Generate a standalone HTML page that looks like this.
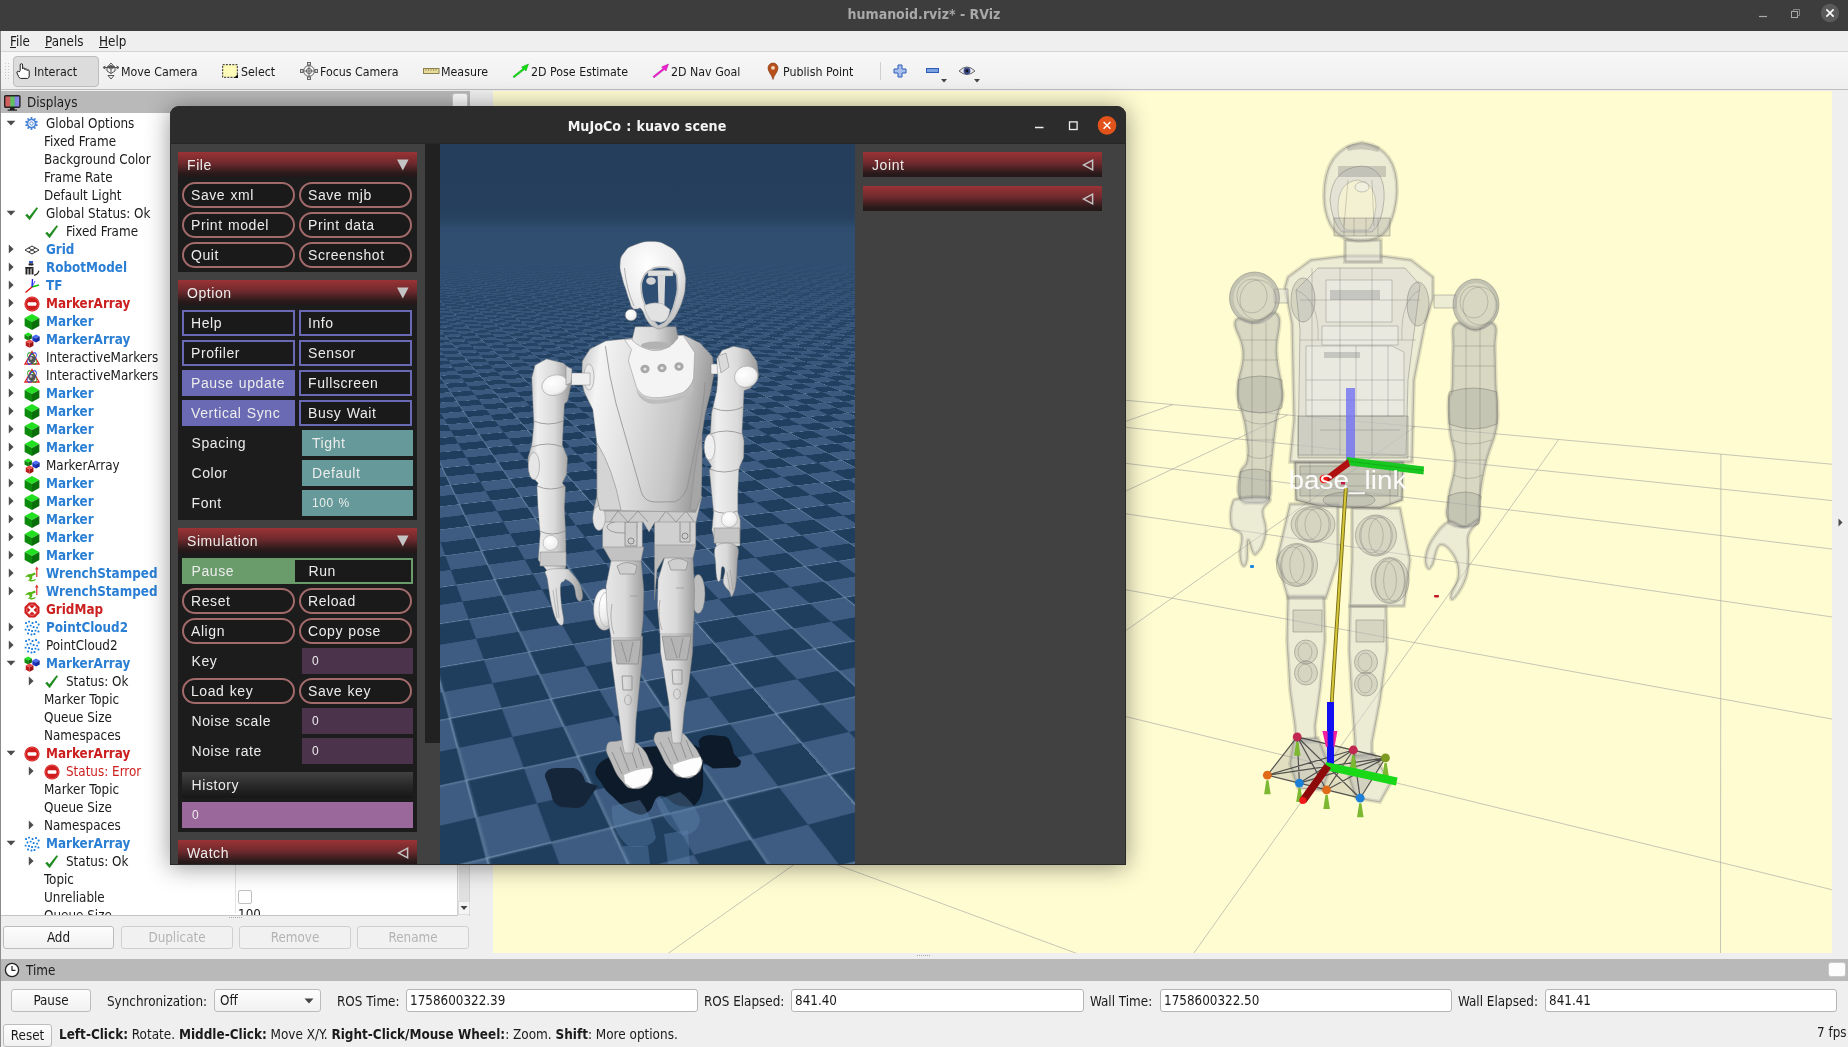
<!DOCTYPE html>
<html><head><meta charset="utf-8"><title>humanoid.rviz* - RViz</title>
<style>
*{box-sizing:border-box}
html,body{margin:0;padding:0}
body{width:1848px;height:1047px;position:relative;overflow:hidden;background:#efefef;
 font-family:"DejaVu Sans Condensed","DejaVu Sans","Liberation Sans",sans-serif;font-size:13.33px;color:#1a1a1a}
.a{position:absolute}
.t{position:absolute;white-space:nowrap;line-height:18px;height:18px}
.b{font-weight:bold}
.blue{color:#2a7fd4}
.red{color:#cc1f1f}
#titlebar{left:0;top:0;width:1848px;height:31px;background:#3d3d3d}
#title{left:0;width:1848px;top:4px;text-align:center;color:#a9a9a9;font-weight:bold;font-size:14px;line-height:20px;font-family:"DejaVu Sans Condensed","DejaVu Sans",sans-serif}
#menubar{left:0;top:31px;width:1848px;height:21px;background:#efefef;border-bottom:1px solid #d4d4d4}
#toolbar{left:0;top:52px;width:1848px;height:38px;background:linear-gradient(#f7f7f7,#efefef);border-bottom:1px solid #bdbdbd}
.tb{position:absolute;top:63px;font-size:12.3px;line-height:18px;white-space:nowrap}
.hdr{background:#b9b9b9}
.btn{position:absolute;border:1px solid #bcbcbc;border-radius:3px;background:linear-gradient(#fdfdfd,#f1f1f1);text-align:center;line-height:22px;height:23px}
.btn.dis{color:#b4b4b4;border-color:#cfcfcf;background:#f1f1f1}
.inp{position:absolute;border:1px solid #b5b5b5;border-radius:3px;background:#fff;height:23px;line-height:22px;padding-left:3px}
/* mujoco */
#mj{left:170px;top:106px;width:956px;height:759px;background:#414141;border-radius:9px 9px 0 0;box-shadow:0 2px 24px 0 rgba(0,0,0,.42);overflow:hidden;
 font-family:"Liberation Sans",sans-serif;font-size:14px;color:#ececec;letter-spacing:.58px;word-spacing:.8px}
#mjtitle{left:0;top:0;width:956px;height:38px;background:#2c2c2c}
.sec{position:absolute;left:8px;width:239px;background:#1c1c1c}
.sh{position:absolute;left:8px;width:239px;height:25px;background:linear-gradient(#9a3336 0%,#6e2a2d 45%,#2a1a1b 85%,#221819 100%);line-height:27px;padding-left:9px}
.mb{position:absolute;width:113px;height:26px;border:2px solid #a26a6a;border-radius:13px;line-height:22px;padding-left:7px;background:#1a1a1a}
.mc{position:absolute;width:113px;height:26px;border:2px solid #6a6ab4;line-height:22px;padding-left:7px;background:#1a1a1a}
.mc.on{background:#6a6ab4}
.ml{position:absolute;line-height:26px;height:26px}
.mv{position:absolute;width:111px;height:26px;line-height:26px;padding-left:10px}

#root{position:absolute;left:0;top:0;width:1848px;height:1047px;will-change:transform}

</style></head>
<body>
<div id="root">
<div id="titlebar" class="a"></div>
<div id="title" class="a">humanoid.rviz* - RViz</div>
<svg class="a" style="left:1755px;top:4.5px" width="16" height="16" viewBox="0 0 16 16" ><path d="M4 11.5 H12" stroke="#aaa" stroke-width="1.2"/></svg>
<svg class="a" style="left:1787px;top:5px" width="16" height="16" viewBox="0 0 16 16" ><rect x="4.5" y="6.5" width="6" height="6" fill="#3d3d3d" stroke="#aaa" stroke-width="1"/><path d="M6.5 6.5 V4.5 H12.5 V10.5 H10.5" fill="none" stroke="#888" stroke-width="1"/></svg>
<svg class="a" style="left:1820px;top:3px" width="20" height="20" viewBox="0 0 20 20" ><circle cx="10" cy="10" r="9.2" fill="#5a5a5a"/><path d="M6.4 6.4 L13.6 13.6 M13.6 6.4 L6.4 13.6" stroke="#fff" stroke-width="1.6"/></svg>
<div id="menubar" class="a"></div>
<div class="t" style="left:10px;top:33px"><u>F</u>ile</div>
<div class="t" style="left:45px;top:33px"><u>P</u>anels</div>
<div class="t" style="left:99px;top:33px"><u>H</u>elp</div>
<div id="toolbar" class="a"></div>
<svg class="a" style="left:5px;top:63px" width="5" height="18" viewBox="0 0 5 18" ><rect x="0" y="0" width="1" height="1" fill="#c8c8c8"/><rect x="0" y="3" width="1" height="1" fill="#c8c8c8"/><rect x="0" y="6" width="1" height="1" fill="#c8c8c8"/><rect x="0" y="9" width="1" height="1" fill="#c8c8c8"/><rect x="0" y="12" width="1" height="1" fill="#c8c8c8"/><rect x="0" y="15" width="1" height="1" fill="#c8c8c8"/><rect x="3" y="0" width="1" height="1" fill="#c8c8c8"/><rect x="3" y="3" width="1" height="1" fill="#c8c8c8"/><rect x="3" y="6" width="1" height="1" fill="#c8c8c8"/><rect x="3" y="9" width="1" height="1" fill="#c8c8c8"/><rect x="3" y="12" width="1" height="1" fill="#c8c8c8"/><rect x="3" y="15" width="1" height="1" fill="#c8c8c8"/></svg>
<div class="a" style="left:13px;top:56px;width:86px;height:31px;border:1px solid #bdbdbd;border-radius:4px;background:#dcdcdc"></div>
<svg class="a" style="left:15px;top:62px" width="18" height="18" viewBox="0 0 18 18" ><path d="M5.2 8.5 V3 q0 -1.3 1.2 -1.3 q1.2 0 1.2 1.3 V7 q0 -1 1.2 -1 q1.1 0 1.1 1 v.7 q0 -1 1.2 -.9 q1 .1 1 1 v.8 q0 -.8 1.1 -.7 q1 .1 1 1 V14 q0 2 -1.6 2.4 H5.6 q-1.4 -.3 -2 -1.8 L2 11 q-.5 -1.4 .7 -1.7 q.9 -.2 1.5 .8 z" fill="#fff" stroke="#222" stroke-width="1"/></svg>
<div class="tb" style="left:34px">Interact</div>
<svg class="a" style="left:102px;top:62px" width="18" height="18" viewBox="0 0 18 18" ><g fill="none" stroke="#555" stroke-width="1"><path d="M9 1 L12 4.5 H6 Z M9 17 L12 13.5 H6 Z"/><path d="M1 5.5 L17 5.5 M1 5.5 l2.5 -1.5 M1 5.5 l2.5 1.5 M17 5.5 l-2.5 -1.5 M17 5.5 l-2.5 1.5"/><path d="M5 5 L9 3.5 L13 5 L13 9 L9 11.5 L5 9 Z M5 5 L9 7 L13 5 M9 7 V11.5"/></g></svg>
<div class="tb" style="left:121px">Move Camera</div>
<svg class="a" style="left:222px;top:64px" width="17" height="15" viewBox="0 0 17 15" ><rect x=".7" y=".7" width="14.6" height="12.6" fill="#fffbb8" stroke="#222" stroke-width="1" stroke-dasharray="2 1.2"/><path d="M16 14 h-4 l4 -4z" fill="#111"/></svg>
<div class="tb" style="left:241px">Select</div>
<svg class="a" style="left:300px;top:62px" width="18" height="18" viewBox="0 0 18 18" ><g fill="none" stroke="#666" stroke-width="1"><circle cx="9" cy="9" r="5.4"/><circle cx="9" cy="9" r="2.6"/><path d="M9 0.5 V17.5 M0.5 9 H17.5"/><rect x="7.5" y="0.5" width="3" height="2.5" fill="#ddd"/><rect x="7.5" y="15" width="3" height="2.5" fill="#ddd"/><rect x=".5" y="7.5" width="2.5" height="3" fill="#ddd"/><rect x="15" y="7.5" width="2.5" height="3" fill="#ddd"/></g></svg>
<div class="tb" style="left:320px">Focus Camera</div>
<svg class="a" style="left:423px;top:68px" width="17" height="7" viewBox="0 0 17 7" ><rect x=".5" y=".5" width="15.5" height="5" fill="#e8dc9a" stroke="#8a8050" stroke-width="1"/><path d="M3 1 v2 M5.5 1 v2 M8 1 v2 M10.5 1 v2 M13 1 v2" stroke="#8a8050" stroke-width=".7"/></svg>
<div class="tb" style="left:441px">Measure</div>
<svg class="a" style="left:512px;top:63px" width="18" height="16" viewBox="0 0 18 16" ><path d="M1 13.5 L11 5.5 L9.6 4 L16.5 1 L14 8 L12.4 6.6 L2 14.8 Z" fill="#10e010" stroke="#0a9a0a" stroke-width=".5"/></svg>
<div class="tb" style="left:531px">2D Pose Estimate</div>
<svg class="a" style="left:652px;top:63px" width="18" height="16" viewBox="0 0 18 16" ><path d="M1 13.5 L11 5.5 L9.6 4 L16.5 1 L14 8 L12.4 6.6 L2 14.8 Z" fill="#f020d0" stroke="#b010a0" stroke-width=".5"/></svg>
<div class="tb" style="left:671px">2D Nav Goal</div>
<svg class="a" style="left:767px;top:62px" width="12" height="18" viewBox="0 0 12 18" ><path d="M6 17.5 C5 13 1 10 1 6 A5 5 0 0 1 11 6 C11 10 7 13 6 17.5 Z" fill="#b8501a" stroke="#7a3410" stroke-width=".6"/><circle cx="6" cy="5.8" r="1.9" fill="#f0d8c0"/></svg>
<div class="tb" style="left:783px">Publish Point</div>
<div class="a" style="left:880px;top:62px;width:1px;height:18px;background:#cfcfcf"></div>
<svg class="a" style="left:893px;top:64px" width="14" height="14" viewBox="0 0 14 14" ><path d="M5 1 h4 v4 h4 v4 h-4 v4 h-4 v-4 h-4 v-4 h4z" fill="#a9c0ec" stroke="#2c5cb8" stroke-width="1"/></svg>
<svg class="a" style="left:926px;top:68px" width="14" height="6" viewBox="0 0 14 6" ><rect x=".5" y=".5" width="12" height="4" fill="#7aa0e0" stroke="#2c5cb8" stroke-width="1"/></svg>
<svg class="a" style="left:941px;top:79px" width="6" height="4" viewBox="0 0 6 4" ><path d="M0 0 H6 L3 3.5Z" fill="#444"/></svg>
<svg class="a" style="left:958px;top:65px" width="18" height="12" viewBox="0 0 18 12" ><path d="M1 6 Q9 -2 17 6 Q9 13 1 6Z" fill="#e8e8f0" stroke="#666" stroke-width="1"/><circle cx="9" cy="6" r="3.4" fill="#3a4a8a"/><circle cx="9" cy="6" r="1.4" fill="#111"/></svg>
<svg class="a" style="left:974px;top:79px" width="6" height="4" viewBox="0 0 6 4" ><path d="M0 0 H6 L3 3.5Z" fill="#444"/></svg>
<div class="a" style="left:0;top:31px;width:1px;height:1016px;background:#8c8c8c"></div>
<div class="a hdr" style="left:1px;top:91px;width:469px;height:22px"></div>
<svg class="a" style="left:4px;top:95px" width="17" height="17" viewBox="0 0 17 17" ><defs><linearGradient id="dg" x1="0" x2="1"><stop offset="0" stop-color="#d06060"/><stop offset=".33" stop-color="#d06060"/><stop offset=".4" stop-color="#60c060"/><stop offset=".62" stop-color="#60c060"/><stop offset=".7" stop-color="#8080e0"/><stop offset="1" stop-color="#9090f0"/></linearGradient></defs><rect x=".7" y=".7" width="15.2" height="11.6" rx="1" fill="url(#dg)" stroke="#222" stroke-width="1.4"/><path d="M6 13 h4.6 v1.6 h2.4 v1.2 h-9.4 v-1.2 h2.4z" fill="#222"/></svg>
<div class="t" style="left:27px;top:94px">Displays</div>
<div class="a" style="left:452px;top:93px;width:16px;height:16px;background:#fcfcfc;border:1px solid #c8c8c8;border-radius:3px"></div>
<div class="a" style="left:1px;top:113px;width:469px;height:803px;background:#fff;border-bottom:1px solid #c4c4c4"></div>
<div class="a" style="left:1px;top:113px;width:469px;height:802px;overflow:hidden"><div class="a" style="left:-1px;top:-113px"><svg class="a" style="left:6px;top:120px" width="10" height="6" viewBox="0 0 10 6" ><path d="M.6 .8 H9.4 L5 5.6 Z" fill="#4c4c4c"/></svg>
<svg class="a" style="left:24px;top:116px" width="16" height="16" viewBox="0 0 16 16" ><g fill="#4a84d6"><rect x="6.6" y="1" width="1.8" height="2.6" rx=".6" transform="rotate(0 7.5 7.5)"/><rect x="6.6" y="1" width="1.8" height="2.6" rx=".6" transform="rotate(36 7.5 7.5)"/><rect x="6.6" y="1" width="1.8" height="2.6" rx=".6" transform="rotate(72 7.5 7.5)"/><rect x="6.6" y="1" width="1.8" height="2.6" rx=".6" transform="rotate(108 7.5 7.5)"/><rect x="6.6" y="1" width="1.8" height="2.6" rx=".6" transform="rotate(144 7.5 7.5)"/><rect x="6.6" y="1" width="1.8" height="2.6" rx=".6" transform="rotate(180 7.5 7.5)"/><rect x="6.6" y="1" width="1.8" height="2.6" rx=".6" transform="rotate(216 7.5 7.5)"/><rect x="6.6" y="1" width="1.8" height="2.6" rx=".6" transform="rotate(252 7.5 7.5)"/><rect x="6.6" y="1" width="1.8" height="2.6" rx=".6" transform="rotate(288 7.5 7.5)"/><rect x="6.6" y="1" width="1.8" height="2.6" rx=".6" transform="rotate(324 7.5 7.5)"/></g><circle cx="7.5" cy="7.5" r="4" fill="none" stroke="#4a84d6" stroke-width="1.7"/><circle cx="7.5" cy="7.5" r="1.7" fill="none" stroke="#4a84d6" stroke-width=".9"/></svg>
<div class="t " style="left:46px;top:115px">Global Options</div>
<div class="t " style="left:44px;top:133px">Fixed Frame</div>
<div class="t " style="left:44px;top:151px">Background Color</div>
<div class="t " style="left:44px;top:169px">Frame Rate</div>
<div class="t " style="left:44px;top:187px">Default Light</div>
<svg class="a" style="left:6px;top:210px" width="10" height="6" viewBox="0 0 10 6" ><path d="M.6 .8 H9.4 L5 5.6 Z" fill="#4c4c4c"/></svg>
<svg class="a" style="left:24px;top:206px" width="16" height="16" viewBox="0 0 16 16" ><path d="M1.5 9.2 L5.6 14 L13.8 2.2 L12.6 1.6 L5.4 10.6 L3.2 8 Z" fill="#1e8a1e" stroke="#1e8a1e" stroke-width=".4"/></svg>
<div class="t " style="left:46px;top:205px">Global Status: Ok</div>
<svg class="a" style="left:44px;top:224px" width="16" height="16" viewBox="0 0 16 16" ><path d="M1.5 9.2 L5.6 14 L13.8 2.2 L12.6 1.6 L5.4 10.6 L3.2 8 Z" fill="#1e8a1e" stroke="#1e8a1e" stroke-width=".4"/></svg>
<div class="t " style="left:66px;top:223px">Fixed Frame</div>
<svg class="a" style="left:8px;top:244px" width="6" height="10" viewBox="0 0 6 10" ><path d="M.8 .6 V9.4 L5.6 5 Z" fill="#4c4c4c"/></svg>
<svg class="a" style="left:24px;top:242px" width="16" height="16" viewBox="0 0 16 16" ><g fill="none" stroke="#333" stroke-width="1"><path d="M1 8 L8 4 L15 8 L8 12 Z"/><path d="M4.5 6 L11.5 10 M11.5 6 L4.5 10"/></g></svg>
<div class="t b blue" style="left:46px;top:241px">Grid</div>
<svg class="a" style="left:8px;top:262px" width="6" height="10" viewBox="0 0 6 10" ><path d="M.8 .6 V9.4 L5.6 5 Z" fill="#4c4c4c"/></svg>
<svg class="a" style="left:24px;top:260px" width="16" height="16" viewBox="0 0 16 16" ><g fill="#222"><rect x="5" y="1" width="4" height="2" fill="#3355cc"/><rect x="4.5" y="3.2" width="5" height="2.2" rx="1"/><rect x="1.5" y="7" width="2" height="7.5"/><rect x="4.5" y="7" width="2" height="7.5"/><rect x="7.5" y="8.5" width="2" height="6"/><path d="M1.5 7 h8 v1.6 h-8z"/><path d="M10 14.5 q3 0 4.5 -4 l1 .4 q-1.6 4.8 -5.5 4.8z"/></g></svg>
<div class="t b blue" style="left:46px;top:259px">RobotModel</div>
<svg class="a" style="left:8px;top:280px" width="6" height="10" viewBox="0 0 6 10" ><path d="M.8 .6 V9.4 L5.6 5 Z" fill="#4c4c4c"/></svg>
<svg class="a" style="left:24px;top:278px" width="16" height="16" viewBox="0 0 16 16" ><g stroke-width="1.4" fill="none"><path d="M8 9 L8.5 1" stroke="#2222ee"/><path d="M8 9 L15 7" stroke="#10c010"/><path d="M8 9 L1.5 14.5" stroke="#e01010"/><path d="M8 9 L11 3" stroke="#2222ee" stroke-width=".8"/></g></svg>
<div class="t b blue" style="left:46px;top:277px">TF</div>
<svg class="a" style="left:8px;top:298px" width="6" height="10" viewBox="0 0 6 10" ><path d="M.8 .6 V9.4 L5.6 5 Z" fill="#4c4c4c"/></svg>
<svg class="a" style="left:24px;top:296px" width="16" height="16" viewBox="0 0 16 16" ><circle cx="8" cy="8" r="7.6" fill="#d01c1c"/><circle cx="8" cy="8" r="6.6" fill="none" stroke="#e85050" stroke-width=".8"/><rect x="3.6" y="6.2" width="8.8" height="3.6" rx="1" fill="#fff"/></svg>
<div class="t b red" style="left:46px;top:295px">MarkerArray</div>
<svg class="a" style="left:8px;top:316px" width="6" height="10" viewBox="0 0 6 10" ><path d="M.8 .6 V9.4 L5.6 5 Z" fill="#4c4c4c"/></svg>
<svg class="a" style="left:24px;top:314px" width="16" height="16" viewBox="0 0 16 16" ><path d="M8 0 L15.36 4.0 L8 8 L0.6399999999999997 4.0 Z" fill="#20e020"/><path d="M0.6399999999999997 4.0 L8 8 L8 16 L0.6399999999999997 12.0 Z" fill="#0c8a0c"/><path d="M15.36 4.0 L8 8 L8 16 L15.36 12.0 Z" fill="#0a6f0a"/></svg>
<div class="t b blue" style="left:46px;top:313px">Marker</div>
<svg class="a" style="left:8px;top:334px" width="6" height="10" viewBox="0 0 6 10" ><path d="M.8 .6 V9.4 L5.6 5 Z" fill="#4c4c4c"/></svg>
<svg class="a" style="left:24px;top:332px" width="16" height="16" viewBox="0 0 16 16" ><path d="M4.2 0.5999999999999996 L7.880000000000001 2.5999999999999996 L4.2 4.6 L0.52 2.5999999999999996 Z" fill="#20e020"/><path d="M0.52 2.5999999999999996 L4.2 4.6 L4.2 8.6 L0.52 6.6 Z" fill="#0c8a0c"/><path d="M7.880000000000001 2.5999999999999996 L4.2 4.6 L4.2 8.6 L7.880000000000001 6.6 Z" fill="#0a6f0a"/><path d="M12 2.4000000000000004 L15.68 4.4 L12 6.4 L8.32 4.4 Z" fill="#4a6cf0"/><path d="M8.32 4.4 L12 6.4 L12 10.4 L8.32 8.4 Z" fill="#1c36c0"/><path d="M15.68 4.4 L12 6.4 L12 10.4 L15.68 8.4 Z" fill="#122a9a"/><path d="M5.6 7.3999999999999995 L9.464 9.5 L5.6 11.6 L1.7359999999999993 9.5 Z" fill="#f05050"/><path d="M1.7359999999999993 9.5 L5.6 11.6 L5.6 15.8 L1.7359999999999993 13.7 Z" fill="#c01c1c"/><path d="M9.464 9.5 L5.6 11.6 L5.6 15.8 L9.464 13.7 Z" fill="#9a1212"/></svg>
<div class="t b blue" style="left:46px;top:331px">MarkerArray</div>
<svg class="a" style="left:8px;top:352px" width="6" height="10" viewBox="0 0 6 10" ><path d="M.8 .6 V9.4 L5.6 5 Z" fill="#4c4c4c"/></svg>
<svg class="a" style="left:24px;top:350px" width="16" height="16" viewBox="0 0 16 16" ><path d="M8 1.5 L15 14 H1 Z" fill="none" stroke="#e02020" stroke-width="1.3"/><ellipse cx="8" cy="8.5" rx="6.5" ry="3" fill="none" stroke="#20a020" stroke-width="1" transform="rotate(58 8 8.5)"/><ellipse cx="8" cy="8.5" rx="6.5" ry="3" fill="none" stroke="#2040e0" stroke-width="1" transform="rotate(-58 8 8.5)"/><circle cx="8" cy="9.5" r="3.4" fill="#555"/><circle cx="7" cy="8.4" r="1.3" fill="#bbb"/></svg>
<div class="t " style="left:46px;top:349px">InteractiveMarkers</div>
<svg class="a" style="left:8px;top:370px" width="6" height="10" viewBox="0 0 6 10" ><path d="M.8 .6 V9.4 L5.6 5 Z" fill="#4c4c4c"/></svg>
<svg class="a" style="left:24px;top:368px" width="16" height="16" viewBox="0 0 16 16" ><path d="M8 1.5 L15 14 H1 Z" fill="none" stroke="#e02020" stroke-width="1.3"/><ellipse cx="8" cy="8.5" rx="6.5" ry="3" fill="none" stroke="#20a020" stroke-width="1" transform="rotate(58 8 8.5)"/><ellipse cx="8" cy="8.5" rx="6.5" ry="3" fill="none" stroke="#2040e0" stroke-width="1" transform="rotate(-58 8 8.5)"/><circle cx="8" cy="9.5" r="3.4" fill="#555"/><circle cx="7" cy="8.4" r="1.3" fill="#bbb"/></svg>
<div class="t " style="left:46px;top:367px">InteractiveMarkers</div>
<svg class="a" style="left:8px;top:388px" width="6" height="10" viewBox="0 0 6 10" ><path d="M.8 .6 V9.4 L5.6 5 Z" fill="#4c4c4c"/></svg>
<svg class="a" style="left:24px;top:386px" width="16" height="16" viewBox="0 0 16 16" ><path d="M8 0 L15.36 4.0 L8 8 L0.6399999999999997 4.0 Z" fill="#20e020"/><path d="M0.6399999999999997 4.0 L8 8 L8 16 L0.6399999999999997 12.0 Z" fill="#0c8a0c"/><path d="M15.36 4.0 L8 8 L8 16 L15.36 12.0 Z" fill="#0a6f0a"/></svg>
<div class="t b blue" style="left:46px;top:385px">Marker</div>
<svg class="a" style="left:8px;top:406px" width="6" height="10" viewBox="0 0 6 10" ><path d="M.8 .6 V9.4 L5.6 5 Z" fill="#4c4c4c"/></svg>
<svg class="a" style="left:24px;top:404px" width="16" height="16" viewBox="0 0 16 16" ><path d="M8 0 L15.36 4.0 L8 8 L0.6399999999999997 4.0 Z" fill="#20e020"/><path d="M0.6399999999999997 4.0 L8 8 L8 16 L0.6399999999999997 12.0 Z" fill="#0c8a0c"/><path d="M15.36 4.0 L8 8 L8 16 L15.36 12.0 Z" fill="#0a6f0a"/></svg>
<div class="t b blue" style="left:46px;top:403px">Marker</div>
<svg class="a" style="left:8px;top:424px" width="6" height="10" viewBox="0 0 6 10" ><path d="M.8 .6 V9.4 L5.6 5 Z" fill="#4c4c4c"/></svg>
<svg class="a" style="left:24px;top:422px" width="16" height="16" viewBox="0 0 16 16" ><path d="M8 0 L15.36 4.0 L8 8 L0.6399999999999997 4.0 Z" fill="#20e020"/><path d="M0.6399999999999997 4.0 L8 8 L8 16 L0.6399999999999997 12.0 Z" fill="#0c8a0c"/><path d="M15.36 4.0 L8 8 L8 16 L15.36 12.0 Z" fill="#0a6f0a"/></svg>
<div class="t b blue" style="left:46px;top:421px">Marker</div>
<svg class="a" style="left:8px;top:442px" width="6" height="10" viewBox="0 0 6 10" ><path d="M.8 .6 V9.4 L5.6 5 Z" fill="#4c4c4c"/></svg>
<svg class="a" style="left:24px;top:440px" width="16" height="16" viewBox="0 0 16 16" ><path d="M8 0 L15.36 4.0 L8 8 L0.6399999999999997 4.0 Z" fill="#20e020"/><path d="M0.6399999999999997 4.0 L8 8 L8 16 L0.6399999999999997 12.0 Z" fill="#0c8a0c"/><path d="M15.36 4.0 L8 8 L8 16 L15.36 12.0 Z" fill="#0a6f0a"/></svg>
<div class="t b blue" style="left:46px;top:439px">Marker</div>
<svg class="a" style="left:8px;top:460px" width="6" height="10" viewBox="0 0 6 10" ><path d="M.8 .6 V9.4 L5.6 5 Z" fill="#4c4c4c"/></svg>
<svg class="a" style="left:24px;top:458px" width="16" height="16" viewBox="0 0 16 16" ><path d="M4.2 0.5999999999999996 L7.880000000000001 2.5999999999999996 L4.2 4.6 L0.52 2.5999999999999996 Z" fill="#20e020"/><path d="M0.52 2.5999999999999996 L4.2 4.6 L4.2 8.6 L0.52 6.6 Z" fill="#0c8a0c"/><path d="M7.880000000000001 2.5999999999999996 L4.2 4.6 L4.2 8.6 L7.880000000000001 6.6 Z" fill="#0a6f0a"/><path d="M12 2.4000000000000004 L15.68 4.4 L12 6.4 L8.32 4.4 Z" fill="#4a6cf0"/><path d="M8.32 4.4 L12 6.4 L12 10.4 L8.32 8.4 Z" fill="#1c36c0"/><path d="M15.68 4.4 L12 6.4 L12 10.4 L15.68 8.4 Z" fill="#122a9a"/><path d="M5.6 7.3999999999999995 L9.464 9.5 L5.6 11.6 L1.7359999999999993 9.5 Z" fill="#f05050"/><path d="M1.7359999999999993 9.5 L5.6 11.6 L5.6 15.8 L1.7359999999999993 13.7 Z" fill="#c01c1c"/><path d="M9.464 9.5 L5.6 11.6 L5.6 15.8 L9.464 13.7 Z" fill="#9a1212"/></svg>
<div class="t " style="left:46px;top:457px">MarkerArray</div>
<svg class="a" style="left:8px;top:478px" width="6" height="10" viewBox="0 0 6 10" ><path d="M.8 .6 V9.4 L5.6 5 Z" fill="#4c4c4c"/></svg>
<svg class="a" style="left:24px;top:476px" width="16" height="16" viewBox="0 0 16 16" ><path d="M8 0 L15.36 4.0 L8 8 L0.6399999999999997 4.0 Z" fill="#20e020"/><path d="M0.6399999999999997 4.0 L8 8 L8 16 L0.6399999999999997 12.0 Z" fill="#0c8a0c"/><path d="M15.36 4.0 L8 8 L8 16 L15.36 12.0 Z" fill="#0a6f0a"/></svg>
<div class="t b blue" style="left:46px;top:475px">Marker</div>
<svg class="a" style="left:8px;top:496px" width="6" height="10" viewBox="0 0 6 10" ><path d="M.8 .6 V9.4 L5.6 5 Z" fill="#4c4c4c"/></svg>
<svg class="a" style="left:24px;top:494px" width="16" height="16" viewBox="0 0 16 16" ><path d="M8 0 L15.36 4.0 L8 8 L0.6399999999999997 4.0 Z" fill="#20e020"/><path d="M0.6399999999999997 4.0 L8 8 L8 16 L0.6399999999999997 12.0 Z" fill="#0c8a0c"/><path d="M15.36 4.0 L8 8 L8 16 L15.36 12.0 Z" fill="#0a6f0a"/></svg>
<div class="t b blue" style="left:46px;top:493px">Marker</div>
<svg class="a" style="left:8px;top:514px" width="6" height="10" viewBox="0 0 6 10" ><path d="M.8 .6 V9.4 L5.6 5 Z" fill="#4c4c4c"/></svg>
<svg class="a" style="left:24px;top:512px" width="16" height="16" viewBox="0 0 16 16" ><path d="M8 0 L15.36 4.0 L8 8 L0.6399999999999997 4.0 Z" fill="#20e020"/><path d="M0.6399999999999997 4.0 L8 8 L8 16 L0.6399999999999997 12.0 Z" fill="#0c8a0c"/><path d="M15.36 4.0 L8 8 L8 16 L15.36 12.0 Z" fill="#0a6f0a"/></svg>
<div class="t b blue" style="left:46px;top:511px">Marker</div>
<svg class="a" style="left:8px;top:532px" width="6" height="10" viewBox="0 0 6 10" ><path d="M.8 .6 V9.4 L5.6 5 Z" fill="#4c4c4c"/></svg>
<svg class="a" style="left:24px;top:530px" width="16" height="16" viewBox="0 0 16 16" ><path d="M8 0 L15.36 4.0 L8 8 L0.6399999999999997 4.0 Z" fill="#20e020"/><path d="M0.6399999999999997 4.0 L8 8 L8 16 L0.6399999999999997 12.0 Z" fill="#0c8a0c"/><path d="M15.36 4.0 L8 8 L8 16 L15.36 12.0 Z" fill="#0a6f0a"/></svg>
<div class="t b blue" style="left:46px;top:529px">Marker</div>
<svg class="a" style="left:8px;top:550px" width="6" height="10" viewBox="0 0 6 10" ><path d="M.8 .6 V9.4 L5.6 5 Z" fill="#4c4c4c"/></svg>
<svg class="a" style="left:24px;top:548px" width="16" height="16" viewBox="0 0 16 16" ><path d="M8 0 L15.36 4.0 L8 8 L0.6399999999999997 4.0 Z" fill="#20e020"/><path d="M0.6399999999999997 4.0 L8 8 L8 16 L0.6399999999999997 12.0 Z" fill="#0c8a0c"/><path d="M15.36 4.0 L8 8 L8 16 L15.36 12.0 Z" fill="#0a6f0a"/></svg>
<div class="t b blue" style="left:46px;top:547px">Marker</div>
<svg class="a" style="left:8px;top:568px" width="6" height="10" viewBox="0 0 6 10" ><path d="M.8 .6 V9.4 L5.6 5 Z" fill="#4c4c4c"/></svg>
<svg class="a" style="left:24px;top:566px" width="16" height="16" viewBox="0 0 16 16" ><path d="M12.8 0.5 L14.6 3.6 H13.4 V11 H12.2 V3.6 H11 Z" fill="#e03030"/><path d="M1 11.5 q2 -4 6 -3.5 l4 -1.5 l.8 2 l-3.6 1.6 q1 3.4 -2.4 4.6 q-1 .3 -2 -.2 l2 -1.6 l-.6 -1.8 l-2.2 -.3 z" fill="#58b818"/><path d="M6 14.5 q3 .8 5.5 -1" fill="none" stroke="#58b818" stroke-width="1.3"/></svg>
<div class="t b blue" style="left:46px;top:565px">WrenchStamped</div>
<svg class="a" style="left:8px;top:586px" width="6" height="10" viewBox="0 0 6 10" ><path d="M.8 .6 V9.4 L5.6 5 Z" fill="#4c4c4c"/></svg>
<svg class="a" style="left:24px;top:584px" width="16" height="16" viewBox="0 0 16 16" ><path d="M12.8 0.5 L14.6 3.6 H13.4 V11 H12.2 V3.6 H11 Z" fill="#e03030"/><path d="M1 11.5 q2 -4 6 -3.5 l4 -1.5 l.8 2 l-3.6 1.6 q1 3.4 -2.4 4.6 q-1 .3 -2 -.2 l2 -1.6 l-.6 -1.8 l-2.2 -.3 z" fill="#58b818"/><path d="M6 14.5 q3 .8 5.5 -1" fill="none" stroke="#58b818" stroke-width="1.3"/></svg>
<div class="t b blue" style="left:46px;top:583px">WrenchStamped</div>
<svg class="a" style="left:24px;top:602px" width="16" height="16" viewBox="0 0 16 16" ><path d="M5 .5 h6 l4.5 4.5 v6 l-4.5 4.5 h-6 l-4.5 -4.5 v-6 z" fill="#d01c1c"/><circle cx="8" cy="8" r="5.3" fill="none" stroke="#ef7f7f" stroke-width=".9"/><path d="M5.2 5.2 L10.8 10.8 M10.8 5.2 L5.2 10.8" stroke="#fff" stroke-width="2.2" stroke-linecap="round"/></svg>
<div class="t b red" style="left:46px;top:601px">GridMap</div>
<svg class="a" style="left:8px;top:622px" width="6" height="10" viewBox="0 0 6 10" ><path d="M.8 .6 V9.4 L5.6 5 Z" fill="#4c4c4c"/></svg>
<svg class="a" style="left:24px;top:620px" width="16" height="16" viewBox="0 0 16 16" ><rect x="1.1" y="2.1" width="1.9" height="1.9" rx=".6" fill="#1f7fe0"/><rect x="4.1" y="0.7000000000000001" width="1.9" height="1.9" rx=".6" fill="#1f7fe0"/><rect x="7.6" y="2.1" width="1.9" height="1.9" rx=".6" fill="#1f7fe0"/><rect x="11.1" y="1.1" width="1.9" height="1.9" rx=".6" fill="#1f7fe0"/><rect x="13.7" y="3.6" width="1.9" height="1.9" rx=".6" fill="#1f7fe0"/><rect x="2.5" y="5.5" width="1.9" height="1.9" rx=".6" fill="#1f7fe0"/><rect x="5.699999999999999" y="4.699999999999999" width="1.9" height="1.9" rx=".6" fill="#1f7fe0"/><rect x="8.7" y="6.1" width="1.9" height="1.9" rx=".6" fill="#1f7fe0"/><rect x="12.1" y="6.699999999999999" width="1.9" height="1.9" rx=".6" fill="#1f7fe0"/><rect x="0.7000000000000001" y="8.7" width="1.9" height="1.9" rx=".6" fill="#1f7fe0"/><rect x="4.1" y="9.1" width="1.9" height="1.9" rx=".6" fill="#1f7fe0"/><rect x="7.1" y="10.1" width="1.9" height="1.9" rx=".6" fill="#1f7fe0"/><rect x="10.5" y="9.7" width="1.9" height="1.9" rx=".6" fill="#1f7fe0"/><rect x="13.5" y="10.5" width="1.9" height="1.9" rx=".6" fill="#1f7fe0"/><rect x="3.1" y="12.5" width="1.9" height="1.9" rx=".6" fill="#1f7fe0"/><rect x="6.5" y="13.5" width="1.9" height="1.9" rx=".6" fill="#1f7fe0"/><rect x="9.5" y="13.1" width="1.9" height="1.9" rx=".6" fill="#1f7fe0"/></svg>
<div class="t b blue" style="left:46px;top:619px">PointCloud2</div>
<svg class="a" style="left:8px;top:640px" width="6" height="10" viewBox="0 0 6 10" ><path d="M.8 .6 V9.4 L5.6 5 Z" fill="#4c4c4c"/></svg>
<svg class="a" style="left:24px;top:638px" width="16" height="16" viewBox="0 0 16 16" ><rect x="1.1" y="2.1" width="1.9" height="1.9" rx=".6" fill="#1f7fe0"/><rect x="4.1" y="0.7000000000000001" width="1.9" height="1.9" rx=".6" fill="#1f7fe0"/><rect x="7.6" y="2.1" width="1.9" height="1.9" rx=".6" fill="#1f7fe0"/><rect x="11.1" y="1.1" width="1.9" height="1.9" rx=".6" fill="#1f7fe0"/><rect x="13.7" y="3.6" width="1.9" height="1.9" rx=".6" fill="#1f7fe0"/><rect x="2.5" y="5.5" width="1.9" height="1.9" rx=".6" fill="#1f7fe0"/><rect x="5.699999999999999" y="4.699999999999999" width="1.9" height="1.9" rx=".6" fill="#1f7fe0"/><rect x="8.7" y="6.1" width="1.9" height="1.9" rx=".6" fill="#1f7fe0"/><rect x="12.1" y="6.699999999999999" width="1.9" height="1.9" rx=".6" fill="#1f7fe0"/><rect x="0.7000000000000001" y="8.7" width="1.9" height="1.9" rx=".6" fill="#1f7fe0"/><rect x="4.1" y="9.1" width="1.9" height="1.9" rx=".6" fill="#1f7fe0"/><rect x="7.1" y="10.1" width="1.9" height="1.9" rx=".6" fill="#1f7fe0"/><rect x="10.5" y="9.7" width="1.9" height="1.9" rx=".6" fill="#1f7fe0"/><rect x="13.5" y="10.5" width="1.9" height="1.9" rx=".6" fill="#1f7fe0"/><rect x="3.1" y="12.5" width="1.9" height="1.9" rx=".6" fill="#1f7fe0"/><rect x="6.5" y="13.5" width="1.9" height="1.9" rx=".6" fill="#1f7fe0"/><rect x="9.5" y="13.1" width="1.9" height="1.9" rx=".6" fill="#1f7fe0"/></svg>
<div class="t " style="left:46px;top:637px">PointCloud2</div>
<svg class="a" style="left:6px;top:660px" width="10" height="6" viewBox="0 0 10 6" ><path d="M.6 .8 H9.4 L5 5.6 Z" fill="#4c4c4c"/></svg>
<svg class="a" style="left:24px;top:656px" width="16" height="16" viewBox="0 0 16 16" ><path d="M4.2 0.5999999999999996 L7.880000000000001 2.5999999999999996 L4.2 4.6 L0.52 2.5999999999999996 Z" fill="#20e020"/><path d="M0.52 2.5999999999999996 L4.2 4.6 L4.2 8.6 L0.52 6.6 Z" fill="#0c8a0c"/><path d="M7.880000000000001 2.5999999999999996 L4.2 4.6 L4.2 8.6 L7.880000000000001 6.6 Z" fill="#0a6f0a"/><path d="M12 2.4000000000000004 L15.68 4.4 L12 6.4 L8.32 4.4 Z" fill="#4a6cf0"/><path d="M8.32 4.4 L12 6.4 L12 10.4 L8.32 8.4 Z" fill="#1c36c0"/><path d="M15.68 4.4 L12 6.4 L12 10.4 L15.68 8.4 Z" fill="#122a9a"/><path d="M5.6 7.3999999999999995 L9.464 9.5 L5.6 11.6 L1.7359999999999993 9.5 Z" fill="#f05050"/><path d="M1.7359999999999993 9.5 L5.6 11.6 L5.6 15.8 L1.7359999999999993 13.7 Z" fill="#c01c1c"/><path d="M9.464 9.5 L5.6 11.6 L5.6 15.8 L9.464 13.7 Z" fill="#9a1212"/></svg>
<div class="t b blue" style="left:46px;top:655px">MarkerArray</div>
<svg class="a" style="left:28px;top:676px" width="6" height="10" viewBox="0 0 6 10" ><path d="M.8 .6 V9.4 L5.6 5 Z" fill="#4c4c4c"/></svg>
<svg class="a" style="left:44px;top:674px" width="16" height="16" viewBox="0 0 16 16" ><path d="M1.5 9.2 L5.6 14 L13.8 2.2 L12.6 1.6 L5.4 10.6 L3.2 8 Z" fill="#1e8a1e" stroke="#1e8a1e" stroke-width=".4"/></svg>
<div class="t " style="left:66px;top:673px">Status: Ok</div>
<div class="t " style="left:44px;top:691px">Marker Topic</div>
<div class="t " style="left:44px;top:709px">Queue Size</div>
<div class="t " style="left:44px;top:727px">Namespaces</div>
<svg class="a" style="left:6px;top:750px" width="10" height="6" viewBox="0 0 10 6" ><path d="M.6 .8 H9.4 L5 5.6 Z" fill="#4c4c4c"/></svg>
<svg class="a" style="left:24px;top:746px" width="16" height="16" viewBox="0 0 16 16" ><circle cx="8" cy="8" r="7.6" fill="#d01c1c"/><circle cx="8" cy="8" r="6.6" fill="none" stroke="#e85050" stroke-width=".8"/><rect x="3.6" y="6.2" width="8.8" height="3.6" rx="1" fill="#fff"/></svg>
<div class="t b red" style="left:46px;top:745px">MarkerArray</div>
<svg class="a" style="left:28px;top:766px" width="6" height="10" viewBox="0 0 6 10" ><path d="M.8 .6 V9.4 L5.6 5 Z" fill="#4c4c4c"/></svg>
<svg class="a" style="left:44px;top:764px" width="16" height="16" viewBox="0 0 16 16" ><circle cx="8" cy="8" r="7.6" fill="#d01c1c"/><circle cx="8" cy="8" r="6.6" fill="none" stroke="#e85050" stroke-width=".8"/><rect x="3.6" y="6.2" width="8.8" height="3.6" rx="1" fill="#fff"/></svg>
<div class="t red" style="left:66px;top:763px">Status: Error</div>
<div class="t " style="left:44px;top:781px">Marker Topic</div>
<div class="t " style="left:44px;top:799px">Queue Size</div>
<svg class="a" style="left:28px;top:820px" width="6" height="10" viewBox="0 0 6 10" ><path d="M.8 .6 V9.4 L5.6 5 Z" fill="#4c4c4c"/></svg>
<div class="t " style="left:44px;top:817px">Namespaces</div>
<svg class="a" style="left:6px;top:840px" width="10" height="6" viewBox="0 0 10 6" ><path d="M.6 .8 H9.4 L5 5.6 Z" fill="#4c4c4c"/></svg>
<svg class="a" style="left:24px;top:836px" width="16" height="16" viewBox="0 0 16 16" ><rect x="1.1" y="2.1" width="1.9" height="1.9" rx=".6" fill="#1f7fe0"/><rect x="4.1" y="0.7000000000000001" width="1.9" height="1.9" rx=".6" fill="#1f7fe0"/><rect x="7.6" y="2.1" width="1.9" height="1.9" rx=".6" fill="#1f7fe0"/><rect x="11.1" y="1.1" width="1.9" height="1.9" rx=".6" fill="#1f7fe0"/><rect x="13.7" y="3.6" width="1.9" height="1.9" rx=".6" fill="#1f7fe0"/><rect x="2.5" y="5.5" width="1.9" height="1.9" rx=".6" fill="#1f7fe0"/><rect x="5.699999999999999" y="4.699999999999999" width="1.9" height="1.9" rx=".6" fill="#1f7fe0"/><rect x="8.7" y="6.1" width="1.9" height="1.9" rx=".6" fill="#1f7fe0"/><rect x="12.1" y="6.699999999999999" width="1.9" height="1.9" rx=".6" fill="#1f7fe0"/><rect x="0.7000000000000001" y="8.7" width="1.9" height="1.9" rx=".6" fill="#1f7fe0"/><rect x="4.1" y="9.1" width="1.9" height="1.9" rx=".6" fill="#1f7fe0"/><rect x="7.1" y="10.1" width="1.9" height="1.9" rx=".6" fill="#1f7fe0"/><rect x="10.5" y="9.7" width="1.9" height="1.9" rx=".6" fill="#1f7fe0"/><rect x="13.5" y="10.5" width="1.9" height="1.9" rx=".6" fill="#1f7fe0"/><rect x="3.1" y="12.5" width="1.9" height="1.9" rx=".6" fill="#1f7fe0"/><rect x="6.5" y="13.5" width="1.9" height="1.9" rx=".6" fill="#1f7fe0"/><rect x="9.5" y="13.1" width="1.9" height="1.9" rx=".6" fill="#1f7fe0"/></svg>
<div class="t b blue" style="left:46px;top:835px">MarkerArray</div>
<svg class="a" style="left:28px;top:856px" width="6" height="10" viewBox="0 0 6 10" ><path d="M.8 .6 V9.4 L5.6 5 Z" fill="#4c4c4c"/></svg>
<svg class="a" style="left:44px;top:854px" width="16" height="16" viewBox="0 0 16 16" ><path d="M1.5 9.2 L5.6 14 L13.8 2.2 L12.6 1.6 L5.4 10.6 L3.2 8 Z" fill="#1e8a1e" stroke="#1e8a1e" stroke-width=".4"/></svg>
<div class="t " style="left:66px;top:853px">Status: Ok</div>
<div class="t " style="left:44px;top:871px">Topic</div>
<div class="t " style="left:44px;top:889px">Unreliable</div>
<div class="t " style="left:44px;top:907px">Queue Size</div><div class="a" style="left:238px;top:890px;width:14px;height:14px;border:1px solid #c0c0c0;border-radius:2px;background:#fff"></div><div class="t" style="left:238px;top:906px">100</div></div></div>
<div class="a" style="left:235px;top:113px;width:1px;height:800px;background:#e4e4e4"></div>
<div class="a" style="left:457px;top:113px;width:13px;height:803px;background:#efefef;border-left:1px solid #d0d0d0;border-right:1px solid #d0d0d0"></div>
<div class="a" style="left:459px;top:113px;width:10px;height:788px;background:#e0e0e0"></div>
<svg class="a" style="left:458px;top:901px" width="12" height="14" viewBox="0 0 12 14" ><rect x="0" y="0" width="12" height="14" fill="#f4f4f4" stroke="#c8c8c8" stroke-width="1"/><path d="M2.5 5 H9.5 L6 9Z" fill="#444"/></svg>
<div class="btn" style="left:3px;top:926px;width:111px">Add</div>
<div class="btn dis" style="left:121px;top:926px;width:112px">Duplicate</div>
<div class="btn dis" style="left:239px;top:926px;width:112px">Remove</div>
<div class="btn dis" style="left:357px;top:926px;width:112px">Rename</div>
<div class="a hdr" style="left:1px;top:959px;width:1847px;height:22px"></div>
<svg class="a" style="left:4px;top:962px" width="16" height="16" viewBox="0 0 16 16" ><circle cx="8" cy="8" r="6.6" fill="#fff" stroke="#222" stroke-width="1.3"/><path d="M8 4 V8.4 H11.4" fill="none" stroke="#222" stroke-width="1.2"/></svg>
<div class="t" style="left:26px;top:962px">Time</div>
<div class="a" style="left:1828px;top:962px;width:18px;height:15px;background:#fcfcfc;border:1px solid #c8c8c8;border-radius:3px"></div>
<div class="btn" style="left:11px;top:989px;width:80px">Pause</div>
<div class="t" style="left:107px;top:993px">Synchronization:</div>
<div class="btn" style="left:214px;top:989px;width:107px;text-align:left;padding-left:5px">Off</div>
<svg class="a" style="left:304px;top:998px" width="10" height="6" viewBox="0 0 10 6" ><path d="M.5 .5 H9.5 L5 5.5Z" fill="#444"/></svg>
<div class="t" style="left:337px;top:993px">ROS Time:</div>
<div class="inp" style="left:406px;top:989px;width:292px">1758600322.39</div>
<div class="t" style="left:704px;top:993px">ROS Elapsed:</div>
<div class="inp" style="left:791px;top:989px;width:293px">841.40</div>
<div class="t" style="left:1090px;top:993px">Wall Time:</div>
<div class="inp" style="left:1160px;top:989px;width:292px">1758600322.50</div>
<div class="t" style="left:1458px;top:993px">Wall Elapsed:</div>
<div class="inp" style="left:1545px;top:989px;width:292px">841.41</div>
<div class="btn" style="left:3px;top:1024px;width:49px">Reset</div>
<div class="t" style="left:59px;top:1026px;font-size:13.42px"><b>Left-Click:</b> Rotate. <b>Middle-Click:</b> Move X/Y. <b>Right-Click/Mouse Wheel:</b>: Zoom. <b>Shift</b>: More options.</div>
<div class="t" style="left:1817px;top:1023.5px">7 fps</div>
<svg class="a" style="left:917px;top:955px" width="14" height="2" viewBox="0 0 14 2" ><rect x="0" y="0" width="1" height="1" fill="#aaa"/><rect x="2" y="0" width="1" height="1" fill="#aaa"/><rect x="4" y="0" width="1" height="1" fill="#aaa"/><rect x="6" y="0" width="1" height="1" fill="#aaa"/><rect x="8" y="0" width="1" height="1" fill="#aaa"/><rect x="10" y="0" width="1" height="1" fill="#aaa"/><rect x="12" y="0" width="1" height="1" fill="#aaa"/></svg>
<svg class="a" style="left:229px;top:917px" width="16" height="2" viewBox="0 0 16 2" ><rect x="0" y="0" width="1" height="1" fill="#aaa"/><rect x="2" y="0" width="1" height="1" fill="#aaa"/><rect x="4" y="0" width="1" height="1" fill="#aaa"/><rect x="6" y="0" width="1" height="1" fill="#aaa"/><rect x="8" y="0" width="1" height="1" fill="#aaa"/><rect x="10" y="0" width="1" height="1" fill="#aaa"/><rect x="12" y="0" width="1" height="1" fill="#aaa"/></svg>
<svg class="a" style="left:1838px;top:517.5px" width="5" height="9" viewBox="0 0 5 9" ><path d="M.5 .5 V8.5 L4.5 4.5Z" fill="#4a4a4a"/></svg>
<div class="a" style="left:493px;top:91px;width:1339px;height:862px;background:#fffcd2;overflow:hidden">
<svg class="a" style="left:0;top:0" width="1339" height="862" viewBox="493 91 1339 862">
<path d="M976.5 386.8L-5708.9 1966.0M1069.9 395.2L-9941.2 3512.7M1173.1 404.6L-18797.0 7463.4M1287.6 414.9L-12237.7 6781.3M1415.3 426.5L-8348.3 7310.8M1558.7 439.5L-2855.8 6654.2M1720.9 454.1L1715.9 7163.7M1905.8 470.9L7086.5 7762.3M2118.6 490.1L11416.5 7022.0M2366.0 512.5L17512.7 7596.7M2657.4 538.9L20772.8 6885.3M976.5 386.8L2657.4 538.9M902.8 404.2L2848.9 606.0M813.1 425.4L3138.8 707.6M701.2 451.8L3629.5 879.5M557.8 485.7L4639.6 1233.3M367.5 530.6L7920.9 2382.9M102.8 593.1L19550.5 7788.8M-290.5 686.1L8512.7 7286.5M-936.6 838.7L-1130.1 7498.8M-2193.9 1135.7L-11322.2 7723.1M-5708.9 1966.0L-20119.5 7232.5" fill="none" stroke="#a4a4a0" stroke-width="1" stroke-opacity=".62"/>
<g>
<path d="M1288 596 L1324 596 L1325 640 L1320 690 L1315 726 L1316 742 L1296 742 L1295 726 L1290 690 L1287 640 Z" fill="#dadad6" fill-opacity=".5" stroke="#6e6e68" stroke-opacity=".5" stroke-width=".8"/>
<path d="M1288 596 L1324 596 L1325 640 L1320 690 L1315 726 L1316 742 L1296 742 L1295 726 L1290 690 L1287 640 Z" fill="none" stroke="#74746e" stroke-opacity=".2" stroke-width="4"/>
<path d="M1350 606 L1386 606 L1387 650 L1380 700 L1372 742 L1372 758 L1355 758 L1355 742 L1352 700 L1349 650 Z" fill="#dadad6" fill-opacity=".5" stroke="#6e6e68" stroke-opacity=".5" stroke-width=".8"/>
<path d="M1350 606 L1386 606 L1387 650 L1380 700 L1372 742 L1372 758 L1355 758 L1355 742 L1352 700 L1349 650 Z" fill="none" stroke="#74746e" stroke-opacity=".2" stroke-width="4"/>
<path d="M1293 610 H1322 V632 H1293Z M1356 620 H1384 V642 H1356Z" fill="#8e8e8a" fill-opacity=".24" stroke="#5c5c56" stroke-opacity=".45" stroke-width=".8"/>
<ellipse cx="1306" cy="652" rx="11.5" ry="12" fill="#8e8e8a" fill-opacity=".24" stroke="#5c5c56" stroke-opacity=".45" stroke-width=".8"/>
<ellipse cx="1305" cy="652" rx="7" ry="9" fill="none" stroke="#55554f" stroke-opacity=".36" stroke-width=".7"/>
<ellipse cx="1306" cy="673" rx="11.5" ry="12" fill="#8e8e8a" fill-opacity=".24" stroke="#5c5c56" stroke-opacity=".45" stroke-width=".8"/>
<ellipse cx="1305" cy="673" rx="7" ry="9" fill="none" stroke="#55554f" stroke-opacity=".36" stroke-width=".7"/>
<ellipse cx="1366" cy="662" rx="11.5" ry="12" fill="#8e8e8a" fill-opacity=".24" stroke="#5c5c56" stroke-opacity=".45" stroke-width=".8"/>
<ellipse cx="1365" cy="662" rx="7" ry="9" fill="none" stroke="#55554f" stroke-opacity=".36" stroke-width=".7"/>
<ellipse cx="1366" cy="684" rx="11.5" ry="12" fill="#8e8e8a" fill-opacity=".24" stroke="#5c5c56" stroke-opacity=".45" stroke-width=".8"/>
<ellipse cx="1365" cy="684" rx="7" ry="9" fill="none" stroke="#55554f" stroke-opacity=".36" stroke-width=".7"/>
<path d="M1294 740 L1318 738 L1330 768 L1322 790 L1298 788 L1290 764 Z" fill="#dadad6" fill-opacity=".5" stroke="#6e6e68" stroke-opacity=".5" stroke-width=".8"/>
<path d="M1294 740 L1318 738 L1330 768 L1322 790 L1298 788 L1290 764 Z" fill="none" stroke="#74746e" stroke-opacity=".2" stroke-width="4"/>
<path d="M1353 756 L1374 754 L1390 784 L1380 802 L1356 798 L1349 776 Z" fill="#dadad6" fill-opacity=".5" stroke="#6e6e68" stroke-opacity=".5" stroke-width=".8"/>
<path d="M1353 756 L1374 754 L1390 784 L1380 802 L1356 798 L1349 776 Z" fill="none" stroke="#74746e" stroke-opacity=".2" stroke-width="4"/>
<path d="M1290 504 L1338 504 L1338 560 L1326 598 L1288 598 L1277 560 Z" fill="#dadad6" fill-opacity=".5" stroke="#6e6e68" stroke-opacity=".5" stroke-width=".8"/>
<path d="M1290 504 L1338 504 L1338 560 L1326 598 L1288 598 L1277 560 Z" fill="none" stroke="#74746e" stroke-opacity=".2" stroke-width="4"/>
<path d="M1352 508 L1400 508 L1410 560 L1404 606 L1350 606 L1352 560 Z" fill="#dadad6" fill-opacity=".5" stroke="#6e6e68" stroke-opacity=".5" stroke-width=".8"/>
<path d="M1352 508 L1400 508 L1410 560 L1404 606 L1350 606 L1352 560 Z" fill="none" stroke="#74746e" stroke-opacity=".2" stroke-width="4"/>
<ellipse cx="1313" cy="524.5" rx="22" ry="18" fill="#8e8e8a" fill-opacity=".24" stroke="#5c5c56" stroke-opacity=".45" stroke-width=".8"/>
<ellipse cx="1309" cy="524.5" rx="12.100000000000001" ry="15.299999999999999" fill="none" stroke="#55554f" stroke-opacity=".36" stroke-width=".7"/>
<ellipse cx="1317" cy="524.5" rx="12.100000000000001" ry="16.2" fill="none" stroke="#55554f" stroke-opacity=".36" stroke-width=".7"/>
<ellipse cx="1313" cy="524.5" rx="17.6" ry="17.099999999999998" fill="none" stroke="#55554f" stroke-opacity=".36" stroke-width=".7"/>
<ellipse cx="1297" cy="565" rx="20.5" ry="21.5" fill="#8e8e8a" fill-opacity=".24" stroke="#5c5c56" stroke-opacity=".45" stroke-width=".8"/>
<ellipse cx="1293" cy="565" rx="11.275" ry="18.275" fill="none" stroke="#55554f" stroke-opacity=".36" stroke-width=".7"/>
<ellipse cx="1301" cy="565" rx="11.275" ry="19.35" fill="none" stroke="#55554f" stroke-opacity=".36" stroke-width=".7"/>
<ellipse cx="1297" cy="565" rx="16.400000000000002" ry="20.425" fill="none" stroke="#55554f" stroke-opacity=".36" stroke-width=".7"/>
<ellipse cx="1376" cy="535.5" rx="20.5" ry="20.5" fill="#8e8e8a" fill-opacity=".24" stroke="#5c5c56" stroke-opacity=".45" stroke-width=".8"/>
<ellipse cx="1372" cy="535.5" rx="11.275" ry="17.425" fill="none" stroke="#55554f" stroke-opacity=".36" stroke-width=".7"/>
<ellipse cx="1380" cy="535.5" rx="11.275" ry="18.45" fill="none" stroke="#55554f" stroke-opacity=".36" stroke-width=".7"/>
<ellipse cx="1376" cy="535.5" rx="16.400000000000002" ry="19.474999999999998" fill="none" stroke="#55554f" stroke-opacity=".36" stroke-width=".7"/>
<ellipse cx="1390" cy="580.5" rx="19" ry="23" fill="#8e8e8a" fill-opacity=".24" stroke="#5c5c56" stroke-opacity=".45" stroke-width=".8"/>
<ellipse cx="1386" cy="580.5" rx="10.450000000000001" ry="19.55" fill="none" stroke="#55554f" stroke-opacity=".36" stroke-width=".7"/>
<ellipse cx="1394" cy="580.5" rx="10.450000000000001" ry="20.7" fill="none" stroke="#55554f" stroke-opacity=".36" stroke-width=".7"/>
<ellipse cx="1390" cy="580.5" rx="15.200000000000001" ry="21.849999999999998" fill="none" stroke="#55554f" stroke-opacity=".36" stroke-width=".7"/>
<path d="M1295 462 L1403 462 L1402 500 L1380 508 L1320 506 L1296 500 Z" fill="#dadad6" fill-opacity=".5" stroke="#6e6e68" stroke-opacity=".5" stroke-width=".8"/>
<path d="M1295 462 L1403 462 L1402 500 L1380 508 L1320 506 L1296 500 Z" fill="none" stroke="#74746e" stroke-opacity=".2" stroke-width="4"/>
<path d="M1295 462 L1403 462 L1402 500 L1380 508 L1320 506 L1296 500 Z" fill="#8e8e8a" fill-opacity=".24" stroke="#5c5c56" stroke-opacity=".45" stroke-width=".8"/>
<path d="M1300 466 H1398 V496 H1300Z" fill="#8e8e8a" fill-opacity=".24" stroke="#5c5c56" stroke-opacity=".45" stroke-width=".8"/>
<path d="M1300 474 H1398 M1310 462 V502 M1390 462 V504 M1330 486 H1372" fill="none" stroke="#55554f" stroke-opacity=".36" stroke-width=".7"/>
<ellipse cx="1349" cy="500" rx="26" ry="8" fill="#8e8e8a" fill-opacity=".24" stroke="#5c5c56" stroke-opacity=".45" stroke-width=".8"/>
<path d="M1311 260 L1345 256 L1381 256 L1411 260 L1433 277 L1433 298 L1425 324 L1414 380 L1412 462 L1290 462 L1294 420 L1292 324 L1285 287 L1288 277 Z" fill="#dadad6" fill-opacity=".5" stroke="#6e6e68" stroke-opacity=".5" stroke-width=".8"/>
<path d="M1311 260 L1345 256 L1381 256 L1411 260 L1433 277 L1433 298 L1425 324 L1414 380 L1412 462 L1290 462 L1294 420 L1292 324 L1285 287 L1288 277 Z" fill="none" stroke="#74746e" stroke-opacity=".2" stroke-width="4"/>
<path d="M1318 268 L1405 268 L1420 285 L1408 380 L1406 455 L1298 455 L1300 330 L1296 290 Z" fill="#dadad6" fill-opacity=".5" stroke="#6e6e68" stroke-opacity=".5" stroke-width=".8"/>
<path d="M1326 280 H1392 V322 H1326Z" fill="#eeeeea" fill-opacity=".55" stroke="#7a7a74" stroke-opacity=".55" stroke-width=".7"/>
<path d="M1322 326 H1398 V345 H1322Z" fill="#eeeeea" fill-opacity=".55" stroke="#7a7a74" stroke-opacity=".55" stroke-width=".7"/>
<path d="M1306 346 L1392 346 L1404 352 L1404 416 L1306 416 Z" fill="#eeeeea" fill-opacity=".55" stroke="#7a7a74" stroke-opacity=".55" stroke-width=".7"/>
<path d="M1298 416 H1408 V458 H1298Z" fill="#8e8e8a" fill-opacity=".24" stroke="#5c5c56" stroke-opacity=".45" stroke-width=".8"/>
<path d="M1330 290 H1380 V300 H1330Z M1324 352 H1360 V358 H1324Z" fill="#777" fill-opacity=".3"/>
<path d="M1300 300 H1420 M1300 340 H1416 M1340 268 V455 M1372 268 V455 M1312 268 V455 M1306 380 H1404 M1306 400 H1404 M1320 430 H1400 M1356 346 V416 M1388 346 V416 M1296 290 Q1320 300 1318 340 M1420 290 Q1400 300 1402 340" fill="none" stroke="#55554f" stroke-opacity=".36" stroke-width=".7"/>
<ellipse cx="1303" cy="300" rx="12" ry="22" fill="#8e8e8a" fill-opacity=".24" stroke="#5c5c56" stroke-opacity=".45" stroke-width=".8"/>
<ellipse cx="1418" cy="304" rx="11" ry="22" fill="#8e8e8a" fill-opacity=".24" stroke="#5c5c56" stroke-opacity=".45" stroke-width=".8"/>
<path d="M1345 240 H1381 V262 H1345Z" fill="#dadad6" fill-opacity=".5" stroke="#6e6e68" stroke-opacity=".5" stroke-width=".8"/>
<path d="M1345 240 H1381 V262 H1345Z" fill="none" stroke="#74746e" stroke-opacity=".2" stroke-width="4"/>
<path d="M1324 196 Q1324 148 1362 142.5 Q1398 148 1397 192 Q1396 212 1388 228 Q1380 242 1358 241 Q1338 240 1330 224 Q1324 212 1324 196 Z" fill="#dadad6" fill-opacity=".5" stroke="#6e6e68" stroke-opacity=".5" stroke-width=".8"/>
<path d="M1324 196 Q1324 148 1362 142.5 Q1398 148 1397 192 Q1396 212 1388 228 Q1380 242 1358 241 Q1338 240 1330 224 Q1324 212 1324 196 Z" fill="none" stroke="#74746e" stroke-opacity=".2" stroke-width="4"/>
<path d="M1330 200 Q1332 168 1362 166 Q1386 168 1384 200 Q1382 224 1372 232 L1342 232 Q1332 222 1330 200Z" fill="#dadad6" fill-opacity=".5" stroke="#6e6e68" stroke-opacity=".5" stroke-width=".8"/>
<path d="M1338 208 Q1338 182 1358 180 Q1376 182 1376 206 Q1374 224 1368 230 L1346 230 Q1338 222 1338 208Z" fill="#fffcd2" fill-opacity=".6" stroke="#7c7c74" stroke-opacity=".5" stroke-width=".7"/>
<path d="M1338 166 H1386 V177 H1338Z" fill="#777" fill-opacity=".3"/>
<path d="M1346 146 Q1362 140 1380 147 L1378 152 Q1362 147 1348 151Z" fill="#777" fill-opacity=".3"/>
<ellipse cx="1362" cy="187" rx="7" ry="5" fill="#eeeeea" fill-opacity=".55" stroke="#7a7a74" stroke-opacity=".55" stroke-width=".7"/>
<path d="M1334 218 H1390 V236 H1334Z" fill="#8e8e8a" fill-opacity=".24" stroke="#5c5c56" stroke-opacity=".45" stroke-width=".8"/>
<path d="M1344 218 V236 M1354 218 V236 M1366 218 V236 M1378 218 V236 M1348 180 L1344 226 M1372 180 L1374 226" fill="none" stroke="#55554f" stroke-opacity=".36" stroke-width=".7"/>
<path d="M1274 289 H1288 V303 H1274Z" fill="#dadad6" fill-opacity=".5" stroke="#6e6e68" stroke-opacity=".5" stroke-width=".8"/>
<ellipse cx="1254.5" cy="298" rx="25" ry="26" fill="#dadad6" fill-opacity=".5" stroke="#6e6e68" stroke-opacity=".5" stroke-width=".8"/>
<ellipse cx="1254.5" cy="298" rx="23" ry="24" fill="none" stroke="#74746e" stroke-opacity=".2" stroke-width="4"/>
<ellipse cx="1254.5" cy="298" rx="25" ry="26" fill="#86867f" fill-opacity=".2"/>
<ellipse cx="1252" cy="296" rx="15" ry="17" fill="none" stroke="#55554f" stroke-opacity=".36" stroke-width=".7"/>
<ellipse cx="1258" cy="300" rx="18" ry="20" fill="none" stroke="#55554f" stroke-opacity=".36" stroke-width=".7"/>
<path d="M1235.3 321.0 C1232.3 327.9 1242.3 337.4 1243.0 351.7 C1243.7 366.0 1239.5 371.6 1238.3 382.3 C1237.1 393.0 1237.0 391.2 1237.7 397.6 C1238.4 404.0 1239.5 402.0 1241.4 409.8 C1243.3 417.6 1244.6 419.6 1246.0 431.0 C1247.4 442.4 1248.9 448.8 1247.5 458.8 C1246.1 468.8 1241.7 464.7 1239.9 474.0 C1238.1 483.3 1236.6 491.7 1239.9 498.5 C1243.2 505.3 1247.2 503.0 1254.0 503.0 C1260.8 503.0 1265.2 505.3 1269.0 498.5 C1272.8 491.7 1269.8 483.3 1270.5 474.0 C1271.2 464.7 1271.0 468.8 1272.0 458.8 C1273.0 448.8 1273.6 441.7 1275.0 431.0 C1276.4 420.3 1276.2 420.8 1278.0 413.0 C1279.8 405.2 1282.0 404.8 1282.7 397.6 C1283.4 390.4 1282.4 393.0 1281.0 382.3 C1279.6 371.6 1277.3 367.4 1276.6 351.7 C1275.9 336.0 1282.8 321.9 1278.0 315.0 C1273.2 308.1 1266.0 320.6 1256.0 322.0 C1246.0 323.4 1238.3 314.1 1235.3 321.0Z" fill="#dadad6" fill-opacity=".5" stroke="#6e6e68" stroke-opacity=".5" stroke-width=".8"/>
<path d="M1235.3 321.0 C1232.3 327.9 1242.3 337.4 1243.0 351.7 C1243.7 366.0 1239.5 371.6 1238.3 382.3 C1237.1 393.0 1237.0 391.2 1237.7 397.6 C1238.4 404.0 1239.5 402.0 1241.4 409.8 C1243.3 417.6 1244.6 419.6 1246.0 431.0 C1247.4 442.4 1248.9 448.8 1247.5 458.8 C1246.1 468.8 1241.7 464.7 1239.9 474.0 C1238.1 483.3 1236.6 491.7 1239.9 498.5 C1243.2 505.3 1247.2 503.0 1254.0 503.0 C1260.8 503.0 1265.2 505.3 1269.0 498.5 C1272.8 491.7 1269.8 483.3 1270.5 474.0 C1271.2 464.7 1271.0 468.8 1272.0 458.8 C1273.0 448.8 1273.6 441.7 1275.0 431.0 C1276.4 420.3 1276.2 420.8 1278.0 413.0 C1279.8 405.2 1282.0 404.8 1282.7 397.6 C1283.4 390.4 1282.4 393.0 1281.0 382.3 C1279.6 371.6 1277.3 367.4 1276.6 351.7 C1275.9 336.0 1282.8 321.9 1278.0 315.0 C1273.2 308.1 1266.0 320.6 1256.0 322.0 C1246.0 323.4 1238.3 314.1 1235.3 321.0Z" fill="none" stroke="#74746e" stroke-opacity=".2" stroke-width="4"/>
<path d="M1235.3 321.0 C1232.3 327.9 1242.3 337.4 1243.0 351.7 C1243.7 366.0 1239.5 371.6 1238.3 382.3 C1237.1 393.0 1237.0 391.2 1237.7 397.6 C1238.4 404.0 1239.5 402.0 1241.4 409.8 C1243.3 417.6 1244.6 419.6 1246.0 431.0 C1247.4 442.4 1248.9 448.8 1247.5 458.8 C1246.1 468.8 1241.7 464.7 1239.9 474.0 C1238.1 483.3 1236.6 491.7 1239.9 498.5 C1243.2 505.3 1247.2 503.0 1254.0 503.0 C1260.8 503.0 1265.2 505.3 1269.0 498.5 C1272.8 491.7 1269.8 483.3 1270.5 474.0 C1271.2 464.7 1271.0 468.8 1272.0 458.8 C1273.0 448.8 1273.6 441.7 1275.0 431.0 C1276.4 420.3 1276.2 420.8 1278.0 413.0 C1279.8 405.2 1282.0 404.8 1282.7 397.6 C1283.4 390.4 1282.4 393.0 1281.0 382.3 C1279.6 371.6 1277.3 367.4 1276.6 351.7 C1275.9 336.0 1282.8 321.9 1278.0 315.0 C1273.2 308.1 1266.0 320.6 1256.0 322.0 C1246.0 323.4 1238.3 314.1 1235.3 321.0Z" fill="#86867f" fill-opacity=".2"/>
<path d="M1238 380 Q1260 372 1282 380 L1282 408 Q1260 418 1238 408Z" fill="#8e8e8a" fill-opacity=".24" stroke="#5c5c56" stroke-opacity=".45" stroke-width=".8"/>
<path d="M1240 472 Q1255 466 1270 472 L1269 500 Q1255 506 1240 500Z" fill="#8e8e8a" fill-opacity=".24" stroke="#5c5c56" stroke-opacity=".45" stroke-width=".8"/>
<path d="M1242 340 H1277 M1244 360 H1278 M1246 440 H1274 M1252 322 V500 M1266 322 V500 M1245 420 Q1260 428 1277 420 M1247 455 Q1260 462 1272 455" fill="none" stroke="#55554f" stroke-opacity=".36" stroke-width=".7"/>
<path d="M1239.9 498.5 C1232.5 499.7 1233.7 499.1 1232.0 504.6 C1230.3 510.1 1229.7 519.9 1231.6 526.0 C1233.5 532.1 1239.7 529.5 1241.4 535.0 C1243.1 540.5 1239.6 547.4 1239.9 553.6 C1240.2 559.8 1241.6 564.5 1243.0 565.8 C1244.4 567.1 1246.0 565.2 1247.0 560.0 C1248.0 554.8 1246.7 541.3 1248.0 540.0 C1249.3 538.7 1251.6 551.2 1253.6 553.6 C1255.6 556.0 1256.2 553.8 1258.0 552.0 C1259.8 550.2 1261.2 549.0 1262.8 544.4 C1264.4 539.8 1265.9 535.7 1265.9 529.0 C1265.9 522.3 1262.2 516.9 1262.8 510.8 C1263.4 504.7 1273.6 501.0 1269.0 498.5 C1264.4 496.0 1247.3 497.3 1239.9 498.5Z" fill="#dadad6" fill-opacity=".5" stroke="#6e6e68" stroke-opacity=".5" stroke-width=".8"/>
<path d="M1239.9 498.5 C1232.5 499.7 1233.7 499.1 1232.0 504.6 C1230.3 510.1 1229.7 519.9 1231.6 526.0 C1233.5 532.1 1239.7 529.5 1241.4 535.0 C1243.1 540.5 1239.6 547.4 1239.9 553.6 C1240.2 559.8 1241.6 564.5 1243.0 565.8 C1244.4 567.1 1246.0 565.2 1247.0 560.0 C1248.0 554.8 1246.7 541.3 1248.0 540.0 C1249.3 538.7 1251.6 551.2 1253.6 553.6 C1255.6 556.0 1256.2 553.8 1258.0 552.0 C1259.8 550.2 1261.2 549.0 1262.8 544.4 C1264.4 539.8 1265.9 535.7 1265.9 529.0 C1265.9 522.3 1262.2 516.9 1262.8 510.8 C1263.4 504.7 1273.6 501.0 1269.0 498.5 C1264.4 496.0 1247.3 497.3 1239.9 498.5Z" fill="none" stroke="#74746e" stroke-opacity=".2" stroke-width="4"/>
<path d="M1434 295 H1456 V308 H1434Z" fill="#dadad6" fill-opacity=".5" stroke="#6e6e68" stroke-opacity=".5" stroke-width=".8"/>
<ellipse cx="1476" cy="304.5" rx="23" ry="25.5" fill="#dadad6" fill-opacity=".5" stroke="#6e6e68" stroke-opacity=".5" stroke-width=".8"/>
<ellipse cx="1476" cy="304.5" rx="21" ry="23.5" fill="none" stroke="#74746e" stroke-opacity=".2" stroke-width="4"/>
<ellipse cx="1476" cy="304.5" rx="23" ry="25.5" fill="#86867f" fill-opacity=".2"/>
<ellipse cx="1474" cy="302" rx="14" ry="16" fill="none" stroke="#55554f" stroke-opacity=".36" stroke-width=".7"/>
<ellipse cx="1480" cy="306" rx="17" ry="19" fill="none" stroke="#55554f" stroke-opacity=".36" stroke-width=".7"/>
<path d="M1455.5 324.0 C1450.4 328.7 1453.8 335.1 1453.0 350.0 C1452.2 364.9 1453.0 376.3 1452.0 388.0 C1451.0 399.7 1449.0 390.2 1448.5 400.0 C1448.0 409.8 1448.3 415.4 1449.8 430.0 C1451.2 444.6 1455.0 446.8 1454.8 462.5 C1454.5 478.2 1450.0 484.1 1448.5 497.5 C1447.0 510.9 1444.9 513.1 1448.5 520.0 C1452.1 526.9 1457.0 527.0 1464.0 527.0 C1471.0 527.0 1474.8 526.9 1478.5 520.0 C1482.2 513.1 1478.0 510.9 1479.8 497.5 C1481.5 484.1 1482.2 478.2 1486.0 462.5 C1489.8 446.8 1493.3 443.4 1496.0 430.0 C1498.7 416.6 1497.5 414.8 1497.5 405.0 C1497.5 395.2 1496.6 400.8 1496.0 388.0 C1495.4 375.2 1495.5 364.9 1495.0 350.0 C1494.5 335.1 1498.7 328.7 1494.0 324.0 C1489.3 319.3 1484.0 330.0 1475.0 330.0 C1466.0 330.0 1460.6 319.3 1455.5 324.0Z" fill="#dadad6" fill-opacity=".5" stroke="#6e6e68" stroke-opacity=".5" stroke-width=".8"/>
<path d="M1455.5 324.0 C1450.4 328.7 1453.8 335.1 1453.0 350.0 C1452.2 364.9 1453.0 376.3 1452.0 388.0 C1451.0 399.7 1449.0 390.2 1448.5 400.0 C1448.0 409.8 1448.3 415.4 1449.8 430.0 C1451.2 444.6 1455.0 446.8 1454.8 462.5 C1454.5 478.2 1450.0 484.1 1448.5 497.5 C1447.0 510.9 1444.9 513.1 1448.5 520.0 C1452.1 526.9 1457.0 527.0 1464.0 527.0 C1471.0 527.0 1474.8 526.9 1478.5 520.0 C1482.2 513.1 1478.0 510.9 1479.8 497.5 C1481.5 484.1 1482.2 478.2 1486.0 462.5 C1489.8 446.8 1493.3 443.4 1496.0 430.0 C1498.7 416.6 1497.5 414.8 1497.5 405.0 C1497.5 395.2 1496.6 400.8 1496.0 388.0 C1495.4 375.2 1495.5 364.9 1495.0 350.0 C1494.5 335.1 1498.7 328.7 1494.0 324.0 C1489.3 319.3 1484.0 330.0 1475.0 330.0 C1466.0 330.0 1460.6 319.3 1455.5 324.0Z" fill="none" stroke="#74746e" stroke-opacity=".2" stroke-width="4"/>
<path d="M1455.5 324.0 C1450.4 328.7 1453.8 335.1 1453.0 350.0 C1452.2 364.9 1453.0 376.3 1452.0 388.0 C1451.0 399.7 1449.0 390.2 1448.5 400.0 C1448.0 409.8 1448.3 415.4 1449.8 430.0 C1451.2 444.6 1455.0 446.8 1454.8 462.5 C1454.5 478.2 1450.0 484.1 1448.5 497.5 C1447.0 510.9 1444.9 513.1 1448.5 520.0 C1452.1 526.9 1457.0 527.0 1464.0 527.0 C1471.0 527.0 1474.8 526.9 1478.5 520.0 C1482.2 513.1 1478.0 510.9 1479.8 497.5 C1481.5 484.1 1482.2 478.2 1486.0 462.5 C1489.8 446.8 1493.3 443.4 1496.0 430.0 C1498.7 416.6 1497.5 414.8 1497.5 405.0 C1497.5 395.2 1496.6 400.8 1496.0 388.0 C1495.4 375.2 1495.5 364.9 1495.0 350.0 C1494.5 335.1 1498.7 328.7 1494.0 324.0 C1489.3 319.3 1484.0 330.0 1475.0 330.0 C1466.0 330.0 1460.6 319.3 1455.5 324.0Z" fill="#86867f" fill-opacity=".2"/>
<path d="M1449 392 Q1474 384 1497 392 L1497 424 Q1474 434 1449 424Z" fill="#8e8e8a" fill-opacity=".24" stroke="#5c5c56" stroke-opacity=".45" stroke-width=".8"/>
<path d="M1448 496 Q1466 488 1481 496 L1479 524 Q1464 531 1448 524Z" fill="#8e8e8a" fill-opacity=".24" stroke="#5c5c56" stroke-opacity=".45" stroke-width=".8"/>
<path d="M1455 346 H1494 M1454 366 H1495 M1455 460 H1486 M1466 328 V524 M1480 328 V500 M1452 440 Q1470 448 1492 440 M1454 475 Q1468 482 1483 475" fill="none" stroke="#55554f" stroke-opacity=".36" stroke-width=".7"/>
<path d="M1448.5 522.0 C1442.4 524.1 1438.0 530.9 1433.5 537.5 C1429.0 544.1 1427.2 549.0 1426.0 555.0 C1424.8 561.0 1426.0 565.5 1427.2 567.5 C1428.5 569.5 1429.8 569.5 1432.2 565.0 C1434.8 560.5 1435.5 547.0 1439.8 545.0 C1444.0 543.0 1449.8 549.0 1453.5 555.0 C1457.2 561.0 1459.0 567.0 1458.5 575.0 C1458.0 583.0 1451.8 590.5 1451.0 595.0 C1450.2 599.5 1451.8 601.0 1454.8 597.5 C1457.8 594.0 1463.2 586.0 1466.0 577.5 C1468.8 569.0 1468.0 563.5 1468.5 555.0 C1469.0 546.5 1466.5 542.0 1468.5 535.0 C1470.5 528.0 1479.4 521.6 1478.5 520.0 C1477.6 518.4 1470.0 526.6 1464.0 527.0 C1458.0 527.4 1454.6 519.9 1448.5 522.0Z" fill="#dadad6" fill-opacity=".5" stroke="#6e6e68" stroke-opacity=".5" stroke-width=".8"/>
<path d="M1448.5 522.0 C1442.4 524.1 1438.0 530.9 1433.5 537.5 C1429.0 544.1 1427.2 549.0 1426.0 555.0 C1424.8 561.0 1426.0 565.5 1427.2 567.5 C1428.5 569.5 1429.8 569.5 1432.2 565.0 C1434.8 560.5 1435.5 547.0 1439.8 545.0 C1444.0 543.0 1449.8 549.0 1453.5 555.0 C1457.2 561.0 1459.0 567.0 1458.5 575.0 C1458.0 583.0 1451.8 590.5 1451.0 595.0 C1450.2 599.5 1451.8 601.0 1454.8 597.5 C1457.8 594.0 1463.2 586.0 1466.0 577.5 C1468.8 569.0 1468.0 563.5 1468.5 555.0 C1469.0 546.5 1466.5 542.0 1468.5 535.0 C1470.5 528.0 1479.4 521.6 1478.5 520.0 C1477.6 518.4 1470.0 526.6 1464.0 527.0 C1458.0 527.4 1454.6 519.9 1448.5 522.0Z" fill="none" stroke="#74746e" stroke-opacity=".2" stroke-width="4"/>
</g>
<path d="M1345.8 488 L1331.6 704" stroke="#756a14" stroke-width="3.8" fill="none"/><path d="M1345.8 488 L1331.6 704" stroke="#d6c63a" stroke-width="2" fill="none"/>
<rect x="1250" y="565" width="4" height="3" rx="1" fill="#1c86e0"/><rect x="1434" y="595" width="5" height="2.5" rx="1" fill="#c01828"/>
<path d="M1346 388 H1355 V461 H1346Z" fill="#7070f4" fill-opacity=".8"/>
<path d="M1347 457 L1424 466.5 L1423.5 474.5 L1346 465 Z" fill="#18c820"/><path d="M1347 461 L1424 470.5" stroke="#0c980c" stroke-width="1" stroke-opacity=".5"/>
<path d="M1348 459 L1327 475 L1321.5 481 L1326 483.5 L1350 466 Z" fill="#b01010"/><circle cx="1323.8" cy="479" r="4.2" fill="#ee1010"/>
<rect x="1341" y="481" width="4" height="3.5" fill="#c01848"/>
<text x="1288.5" y="488.8" font-family="Liberation Sans, sans-serif" font-size="26.4" fill="#ffffff" fill-opacity=".93" textLength="118" lengthAdjust="spacingAndGlyphs">base_link</text>
<path d="M1297.2 736.8 L1353.3 750 L1385.5 757.9 L1360.2 798.2 L1326.5 790 L1299.4 783.1 L1267.3 775.2Z" fill="#888" fill-opacity=".25"/>
<path d="M1297.2 736.8L1353.3 750M1297.2 736.8L1385.5 757.9M1297.2 736.8L1267.3 775.2M1297.2 736.8L1299.4 783.1M1297.2 736.8L1326.5 790M1297.2 736.8L1360.2 798.2M1353.3 750L1385.5 757.9M1353.3 750L1267.3 775.2M1353.3 750L1299.4 783.1M1353.3 750L1326.5 790M1353.3 750L1360.2 798.2M1385.5 757.9L1267.3 775.2M1385.5 757.9L1299.4 783.1M1385.5 757.9L1326.5 790M1385.5 757.9L1360.2 798.2M1267.3 775.2L1299.4 783.1M1267.3 775.2L1326.5 790M1267.3 775.2L1360.2 798.2M1299.4 783.1L1326.5 790M1299.4 783.1L1360.2 798.2M1326.5 790L1360.2 798.2" fill="none" stroke="#3a3a3a" stroke-width="1.2" stroke-opacity=".85"/>
<path d="M1296.2 741.8 L1298.4 741.8 L1300.6000000000001 755.8 L1294.0 755.8Z" fill="#7cb832"/>
<path d="M1352.3 755 L1354.5 755 L1356.7 769 L1350.1 769Z" fill="#7cb832"/>
<path d="M1384.5 762.9 L1386.7 762.9 L1388.9 776.9 L1382.3 776.9Z" fill="#7cb832"/>
<path d="M1266.3 780.2 L1268.5 780.2 L1270.7 794.2 L1264.1 794.2Z" fill="#7cb832"/>
<path d="M1298.4 788.1 L1300.6000000000001 788.1 L1302.8000000000002 802.1 L1296.2 802.1Z" fill="#7cb832"/>
<path d="M1325.5 795 L1327.7 795 L1329.9 809 L1323.3 809Z" fill="#7cb832"/>
<path d="M1359.2 803.2 L1361.4 803.2 L1363.6000000000001 817.2 L1357.0 817.2Z" fill="#7cb832"/>
<circle cx="1297.2" cy="736.8" r="4.4" fill="#c02850"/>
<circle cx="1353.3" cy="750" r="4.4" fill="#c02850"/>
<circle cx="1385.5" cy="757.9" r="4.4" fill="#7c9a20"/>
<circle cx="1267.3" cy="775.2" r="4.4" fill="#e06a18"/>
<circle cx="1299.4" cy="783.1" r="4.4" fill="#1c80d8"/>
<circle cx="1326.5" cy="790" r="4.4" fill="#e06a18"/>
<circle cx="1360.2" cy="798.2" r="4.4" fill="#1c80d8"/>
<path d="M1327 702 H1334 V764 H1327Z" fill="#1010f0"/>
<path d="M1322.4 731 H1337.4 L1334.5 747 H1326Z" fill="#f020a0"/>
<path d="M1327.6 704 H1333.4 V748 H1327.6Z" fill="#1010f0"/>
<path d="M1326 762 L1397.5 777.5 L1396 785.5 L1325 770 Z" fill="#18d818"/>
<path d="M1324.5 764 L1331 768 L1306 803 L1299.5 799 Z" fill="#8e0a0a"/><circle cx="1302.8" cy="800.6" r="3.5" fill="#f01818"/>
</svg></div>
<div id="mj" class="a">
<div id="mjtitle" class="a"></div>
<div class="a" style="left:0;top:11px;width:956px;text-align:center;font-family:'DejaVu Sans Condensed','DejaVu Sans',sans-serif;font-weight:bold;font-size:14.15px;letter-spacing:0;color:#f4f4f4;line-height:18px;padding-right:2px">MuJoCo : kuavo scene</div>
<svg class="a" style="left:860px;top:8px" width="90" height="24"><path d="M5 13.5 H13.5" stroke="#eee" stroke-width="1.3"/><rect x="39.5" y="7.9" width="7.6" height="7.6" fill="none" stroke="#eee" stroke-width="1.3"/><circle cx="77" cy="11.4" r="9.3" fill="#e2531b"/><path d="M73.6 8 L80.4 14.8 M80.4 8 L73.6 14.8" stroke="#fff" stroke-width="1.5"/></svg>
<div class="a" style="left:255px;top:38px;width:15px;height:599px;background:#212121"></div>
<div class="sec" style="top:71px;height:95px"></div>
<div class="sh" style="left:8px;top:46px">File<svg class="a" style="left:219px;top:7px" width="12" height="12"><path d="M0 .5 H11.6 L5.8 11.6Z" fill="#c4c4c4"/></svg></div>
<div class="mb" style="left:12px;top:76px">Save xml</div>
<div class="mb" style="left:129px;top:76px">Save mjb</div>
<div class="mb" style="left:12px;top:106px">Print model</div>
<div class="mb" style="left:129px;top:106px">Print data</div>
<div class="mb" style="left:12px;top:136px">Quit</div>
<div class="mb" style="left:129px;top:136px">Screenshot</div>
<div class="sec" style="top:199px;height:215px"></div>
<div class="sh" style="left:8px;top:174px">Option<svg class="a" style="left:219px;top:7px" width="12" height="12"><path d="M0 .5 H11.6 L5.8 11.6Z" fill="#c4c4c4"/></svg></div>
<div class="mc" style="left:12px;top:204px">Help</div>
<div class="mc" style="left:129px;top:204px">Info</div>
<div class="mc" style="left:12px;top:234px">Profiler</div>
<div class="mc" style="left:129px;top:234px">Sensor</div>
<div class="mc on" style="left:12px;top:264px">Pause update</div>
<div class="mc" style="left:129px;top:264px">Fullscreen</div>
<div class="mc on" style="left:12px;top:294px">Vertical Sync</div>
<div class="mc" style="left:129px;top:294px">Busy Wait</div>
<div class="ml" style="left:21.5px;top:324px">Spacing</div>
<div class="mv" style="left:132px;top:324px;width:111px;background:#669a9a;">Tight</div>
<div class="ml" style="left:21.5px;top:354px">Color</div>
<div class="mv" style="left:132px;top:354px;width:111px;background:#669a9a;">Default</div>
<div class="ml" style="left:21.5px;top:384px">Font</div>
<div class="mv" style="left:132px;top:384px;width:111px;background:#669a9a;font-size:12px;">100 %</div>
<div class="sec" style="top:447px;height:279px"></div>
<div class="sh" style="left:8px;top:422px">Simulation<svg class="a" style="left:219px;top:7px" width="12" height="12"><path d="M0 .5 H11.6 L5.8 11.6Z" fill="#c4c4c4"/></svg></div>
<div class="a" style="left:12px;top:452px;width:231px;height:26px;background:#6a9b6a"></div>
<div class="a" style="left:125px;top:454px;width:116px;height:22px;background:#1a1a1a"></div>
<div class="ml" style="left:21.5px;top:452px">Pause</div><div class="ml" style="left:138.5px;top:452px">Run</div>
<div class="mb" style="left:12px;top:482px">Reset</div>
<div class="mb" style="left:129px;top:482px">Reload</div>
<div class="mb" style="left:12px;top:512px">Align</div>
<div class="mb" style="left:129px;top:512px">Copy pose</div>
<div class="ml" style="left:21.5px;top:542px">Key</div>
<div class="mv" style="left:132px;top:542px;width:111px;background:#4b334b;font-size:12px;">0</div>
<div class="mb" style="left:12px;top:572px">Load key</div>
<div class="mb" style="left:129px;top:572px">Save key</div>
<div class="ml" style="left:21.5px;top:602px">Noise scale</div>
<div class="mv" style="left:132px;top:602px;width:111px;background:#4b334b;font-size:12px;">0</div>
<div class="ml" style="left:21.5px;top:632px">Noise rate</div>
<div class="mv" style="left:132px;top:632px;width:111px;background:#4b334b;font-size:12px;">0</div>
<div class="a" style="left:12px;top:666px;width:231px;height:26px;background:linear-gradient(#424242,#2a2a2a 50%,#161616);line-height:26px;padding-left:9.5px">History</div>
<div class="mv" style="left:12px;top:696px;width:231px;background:#9a689a;font-size:12px;">0</div>
<div class="sh" style="left:8px;top:734px">Watch<svg class="a" style="left:219px;top:7px" width="12" height="12"><path d="M10.6 1.2 V10.8 L1.4 6Z" fill="none" stroke="#c4c4c4" stroke-width="1.5"/></svg></div>
<div class="sh" style="left:693px;top:46px">Joint<svg class="a" style="left:219px;top:7px" width="12" height="12"><path d="M10.6 1.2 V10.8 L1.4 6Z" fill="none" stroke="#c4c4c4" stroke-width="1.5"/></svg></div>
<div class="sh" style="left:693px;top:80px"><svg class="a" style="left:219px;top:7px" width="12" height="12"><path d="M10.6 1.2 V10.8 L1.4 6Z" fill="none" stroke="#c4c4c4" stroke-width="1.5"/></svg></div>
<div class="a" style="left:270px;top:38px;width:415px;height:721px;overflow:hidden;background:linear-gradient(#243f5d 0px,#27425f 30px,#2d4b6e 78px,#32547a 95px,#33567c 130px)">
<div class="a" style="left:0;top:0;width:2304px;height:3840px;transform-origin:0 0;transform:matrix3d(0.24535487,0.0033825868,0,8.7393328e-05,0.032257994,-0.007576867,0,-0.00023894445,0,0,1,0,-129.7475,112.67274,0,1);background:linear-gradient(90deg,rgba(150,180,210,.6) 1.5px,transparent 1.5px) -0.75px 0/64.0px 64.0px,linear-gradient(180deg,rgba(150,180,210,.6) 1.5px,transparent 1.5px) 0 -0.75px/64.0px 64.0px,conic-gradient(#3e5c81 90deg,#1f3e5e 90deg 180deg,#3e5c81 180deg 270deg,#1f3e5e 270deg) 0 0/64.0px 64.0px"></div>
<div class="a" style="left:0;top:0;width:415px;height:320px;background:linear-gradient(rgba(36,62,91,1) 0px,rgba(37,63,92,1) 66px,rgba(39,66,96,1) 74px,rgba(46,76,109,1) 84px,rgba(47,78,112,1) 90px,rgba(47,78,112,1) 118px,rgba(47,78,112,.82) 132px,rgba(47,78,112,.6) 156px,rgba(47,78,112,.36) 196px,rgba(47,78,112,.16) 246px,rgba(47,78,112,0) 310px)"></div>
<svg class="a" style="left:0;top:0" width="415" height="721" viewBox="440 144 415 721">
<defs>
<linearGradient id="mg" x1="0" x2="1"><stop offset="0" stop-color="#bdbdbd"/><stop offset=".22" stop-color="#efefef"/><stop offset=".6" stop-color="#dadada"/><stop offset="1" stop-color="#989898"/></linearGradient>
<linearGradient id="mg2" x1="0" x2="1"><stop offset="0" stop-color="#e6e6e6"/><stop offset=".5" stop-color="#d9d9d9"/><stop offset="1" stop-color="#9e9e9e"/></linearGradient>
<linearGradient id="mgt" x1="0" y1="0" x2="1" y2=".2"><stop offset="0" stop-color="#c2c2c2"/><stop offset=".16" stop-color="#f4f4f4"/><stop offset=".5" stop-color="#dcdcdc"/><stop offset=".8" stop-color="#c4c4c4"/><stop offset="1" stop-color="#9a9a9a"/></linearGradient>
<radialGradient id="mgh" cx=".42" cy=".28" r=".85"><stop offset="0" stop-color="#ffffff"/><stop offset=".55" stop-color="#ebebeb"/><stop offset="1" stop-color="#adadad"/></radialGradient>
<radialGradient id="mgc" cx=".4" cy=".35" r=".75"><stop offset="0" stop-color="#ffffff"/><stop offset=".7" stop-color="#f0f0f0"/><stop offset="1" stop-color="#c4c4c4"/></radialGradient>
</defs>
<g fill="#0d1a2a">
<path d="M596.0 769.0 C598.7 762.2 603.4 759.9 613.7 755.0 C624.0 750.1 626.4 750.1 640.0 748.0 C653.6 745.9 658.3 746.2 672.0 746.0 C685.7 745.8 691.4 742.0 698.6 747.3 C705.8 752.6 702.9 756.3 703.0 768.6 C703.1 780.9 704.4 791.3 699.0 800.0 C693.6 808.7 689.1 806.9 680.0 806.0 C670.9 805.1 667.5 794.6 660.0 796.0 C652.5 797.4 654.5 808.3 648.0 812.0 C641.5 815.7 640.4 815.7 632.0 812.0 C623.6 808.3 619.0 802.5 612.0 796.0 C605.0 789.5 605.7 790.3 602.0 784.0 C598.3 777.7 593.3 775.8 596.0 769.0Z"/>
<path d="M544.8 776 Q546 768 556 768 L574 768 Q582 770 585.5 782 L598 786 L588 800 Q584 808 576 808 L561 807 Q552 804 551 793 Z" fill="#16263a"/>
<path d="M698.6 741 Q701 735 711 735 L726 736.5 Q731 739 734 754 L741 761 Q741 767 735 767.5 L713 768.6 L702 761.5 Z"/>
</g>
<g fill="#5d82ad" fill-opacity=".4"><path d="M612 806 Q610 830 628 846 Q650 850 656 838 Q652 816 640 800 Z"/><path d="M656 800 Q664 826 684 836 Q700 832 700 818 Q694 802 680 792 Z"/><path d="M622 846 L626 864 L650 864 L648 846Z"/><path d="M664 834 L668 864 L690 864 L688 830Z"/></g>
<path d="M606.7 746.0 C608.3 739.9 611.8 742.3 618.0 741.0 C624.2 739.7 623.6 739.1 630.0 741.0 C636.4 742.9 636.7 742.4 642.0 748.0 C647.3 753.6 647.2 755.6 650.0 762.0 C652.8 768.4 653.4 766.1 652.6 772.0 C651.8 777.9 652.2 779.6 647.0 784.0 C641.8 788.4 639.7 789.3 633.0 788.5 C626.3 787.7 627.6 787.5 622.0 781.0 C616.4 774.5 616.1 773.3 612.0 764.0 C607.9 754.7 605.1 752.1 606.7 746.0Z" fill="#bcbcbc" stroke="#808080" stroke-width=".6" stroke-opacity=".75"/>
<path d="M624 775 Q636 769 651 768 L652.4 773 L647 784 L633 788.5 L625 783Z" fill="#fdfdfd"/>
<path d="M612 752 l10 22 M620 747 l9 24 M630 746 l7 22 M638 748 l6 18" stroke="#8a8a8a" stroke-width=".9" fill="none"/>
<path d="M654.4 736.0 C656.0 730.5 659.2 732.6 666.0 731.5 C672.8 730.4 673.2 728.9 680.0 732.0 C686.8 735.1 686.2 736.6 691.5 743.0 C696.8 749.4 697.2 750.4 700.0 756.0 C702.8 761.6 703.1 759.1 702.0 764.0 C700.9 768.9 701.1 770.9 696.0 774.5 C690.9 778.1 689.4 778.8 682.7 777.6 C676.0 776.4 677.1 776.8 671.0 770.0 C664.9 763.2 664.4 761.1 660.0 752.0 C655.6 742.9 652.8 741.5 654.4 736.0Z" fill="#bcbcbc" stroke="#808080" stroke-width=".6" stroke-opacity=".75"/>
<path d="M673 765 Q686 759 700.6 757 L702 764 L696 774.5 L682.7 777.6 L674 772Z" fill="#fdfdfd"/>
<path d="M660 742 l11 22 M668 737 l10 24 M678 736 l8 22 M686 740 l7 17" stroke="#8a8a8a" stroke-width=".9" fill="none"/>
<path d="M611 636 L642.6 636 L642 660 L639 690 L636 720 L635 744 L633 753 L624.5 753 L622.6 744 L619 716 L615 686 L611.5 660 Z" fill="url(#mg2)" stroke="#808080" stroke-width=".6" stroke-opacity=".75"/>
<path d="M660 632 L693 632 L692.6 652 L689 682 L684 712 L682.5 730 L681 743 L672.5 743 L671 730 L669 704 L664.5 676 L660.5 652 Z" fill="url(#mg2)" stroke="#808080" stroke-width=".6" stroke-opacity=".75"/>
<path d="M613 640 H641 L638 664 H617Z M662 636 H691 L687 660 H666Z" fill="#b4b4b4" stroke="#7c7c7c" stroke-width=".6"/>
<path d="M621 642 l6 20 M633 642 l-4 20 M671 638 l6 20 M683 638 l-4 20 M622 676 h10 v14 h-9z M672 670 h10 v14 h-9z" fill="none" stroke="#8a8a8a" stroke-width=".8"/>
<ellipse cx="628" cy="700" rx="3.4" ry="5" fill="none" stroke="#999" stroke-width=".7"/><ellipse cx="677" cy="694" rx="3.4" ry="5" fill="none" stroke="#999" stroke-width=".7"/>
<ellipse cx="604.3" cy="609.5" rx="10.8" ry="20.8" fill="url(#mgh)" stroke="#808080" stroke-width=".6" stroke-opacity=".75"/>
<ellipse cx="606.5" cy="609.5" rx="7.5" ry="17.5" fill="none" stroke="#aaa" stroke-width=".6"/>
<ellipse cx="698.2" cy="594" rx="6.8" ry="19.4" fill="#bebebe" stroke="#808080" stroke-width=".6" stroke-opacity=".75"/>
<path d="M611.7 558 L640.8 558 L643.8 590 L643 620 L641 638 L611 638 L607 612 L606 586 Z" fill="url(#mg2)" stroke="#808080" stroke-width=".6" stroke-opacity=".75"/>
<path d="M665 556 L692.8 556 L694.5 590 L694 616 L692.8 634 L660 634 L657.5 606 L658 580 Z" fill="url(#mg2)" stroke="#808080" stroke-width=".6" stroke-opacity=".75"/>
<path d="M602.6 520 H642.3 V548 H602.6Z" fill="#d6d6d6" stroke="#808080" stroke-width=".6" stroke-opacity=".75"/><path d="M603 547 H643.8 L641 561 H611Z" fill="#c2c2c2" stroke="#808080" stroke-width=".6" stroke-opacity=".75"/>
<path d="M654.5 520 H695.8 V546 H654.5Z" fill="#d0d0d0" stroke="#808080" stroke-width=".6" stroke-opacity=".75"/><path d="M654.5 545 H696 L693 558 H664 L657 570 L654.5 600Z" fill="#bcbcbc" stroke="#808080" stroke-width=".6" stroke-opacity=".75"/>
<ellipse cx="622" cy="527" rx="15" ry="6" fill="none" stroke="#8c8c8c" stroke-width=".8"/><path d="M625 522 h12 v24 h-12z M680 520 h10 v22 h-10z" fill="#cdcdcd" stroke="#7c7c7c" stroke-width=".7"/><circle cx="631" cy="541" r="3" fill="none" stroke="#777" stroke-width=".8"/><circle cx="685" cy="536" r="3" fill="none" stroke="#777" stroke-width=".8"/>
<path d="M617 566 q10 -7 20 0 l-2 8 h-15z M668 562 q10 -7 20 0 l-2 8 h-15z" fill="#cfcfcf" stroke="#8a8a8a" stroke-width=".7"/>
<path d="M630 596 h8 M676 588 h8 M612 604 q-3 16 2 30 M660 600 q-3 16 2 30" fill="none" stroke="#999" stroke-width=".7"/>
<path d="M597 496 L702 496 L696 522 L655 522 L649 532 L643 522 L600 522 L593.5 511 Z" fill="#cbcbcb" stroke="#808080" stroke-width=".6" stroke-opacity=".75"/>
<ellipse cx="599" cy="518" rx="6.3" ry="12.4" fill="#e4e4e4" stroke="#808080" stroke-width=".6" stroke-opacity=".75"/>
<path d="M604 511 L694 511 M610 522 l8 -11 l10 11 l10 -11 l10 11 M658 522 l8 -11 l10 11 l10 -11 l8 11" fill="none" stroke="#8c8c8c" stroke-width=".8"/>
<path d="M605.8 341.0 L624.0 339.0 L634.0 338.0 L676.0 335.3 L684.0 335.3 L700.0 343.0 L712.6 356.8 L713.6 375.7 L710.5 392.5 L705.2 413.6 L702.0 434.6 L702.0 466.0 L701.0 497.6 L695.7 512.3 L600.0 510.0 L597.0 497.0 L597.0 445.0 L595.9 434.6 L592.8 409.4 L584.4 392.5 L581.8 382.0 L582.3 361.0 L590.0 349.0Z" fill="url(#mgt)" stroke="#808080" stroke-width=".6" stroke-opacity=".75" stroke-linejoin="round"/>
<path d="M597 443 Q613 468 621 510 L600 510 L597 497 Z" fill="#d4d4d4" stroke="#8c8c8c" stroke-width=".6"/>
<path d="M700 440 Q694 470 690 510 L696 510 L701 497 L702 450Z" fill="#a6a6a6" stroke="#8c8c8c" stroke-width=".5"/>
<path d="M605.4 346 Q609 376 615.9 403 L641 491 Q644 502 655 502 L675 501.8 Q684 498 687.3 487 L700 424 Q704 400 705.2 382" fill="none" stroke="#8e8e8e" stroke-width=".8"/>
<path d="M624.4 339.6 L631.6 349.6 Q629 356 628.5 361 L634.8 382 Q637 392 645 396 Q658 401 683 392.5 Q692 386 693.6 377.8 L694.7 352.6 L683.2 335.3 Z" fill="#f4f4f4" stroke="#9a9a9a" stroke-width=".6"/>
<path d="M636 388 Q640 397 650 399 Q664 402 684 394 Q690 390 692.6 383 L693.4 389 Q690 396 684 398.5 Q662 406 648 403 Q640 400 637.4 393 Z" fill="#bdbdbd"/>
<g fill="#a8a8a8"><ellipse cx="645" cy="369" rx="4.6" ry="4.2"/><ellipse cx="662" cy="368" rx="4.6" ry="4.2"/><ellipse cx="679" cy="366.5" rx="4.6" ry="4.2"/></g><g fill="#e8e8e8"><circle cx="645" cy="369" r="1.6"/><circle cx="662" cy="368" r="1.6"/><circle cx="679" cy="366.5" r="1.6"/></g>
<ellipse cx="589" cy="377" rx="5" ry="13" fill="#e9e9e9" stroke="#9a9a9a" stroke-width=".6"/>
<path d="M635.2 326.7 L676 326.7 L678 338 Q668 352 652 350.5 Q640 348 632 340 Z" fill="url(#mg2)" stroke="#808080" stroke-width=".6" stroke-opacity=".75"/>
<ellipse cx="656" cy="345.5" rx="15" ry="4" fill="#b2b2b2"/>
<circle cx="631" cy="315" r="5.8" fill="url(#mgc)" stroke="#8c8c8c" stroke-width=".6"/>
<path d="M620.1 263.7 C620.6 257.2 620.8 256.9 624.4 252.2 C628.0 247.5 627.7 247.7 634.5 245.0 C641.3 242.3 643.5 241.2 651.7 241.4 C659.9 241.6 660.6 241.9 667.4 245.7 C674.2 249.5 674.6 249.9 678.9 256.5 C683.2 263.1 683.0 265.0 684.6 272.2 C686.2 279.4 685.6 278.7 685.3 285.1 C684.9 291.6 685.2 291.2 683.2 298.0 C681.2 304.8 680.7 306.3 677.5 312.4 C674.3 318.5 674.2 318.4 670.3 322.4 C666.3 326.4 665.7 327.1 661.7 328.3 C657.8 329.6 658.1 329.2 654.5 327.4 C650.9 325.6 650.6 325.5 647.4 321.0 C644.2 316.5 644.2 312.5 641.6 309.5 C639.0 306.5 639.3 309.4 637.0 309.0 C634.7 308.6 634.5 310.2 632.5 308.0 C630.5 305.8 630.8 304.5 629.2 300.0 C627.6 295.5 627.7 295.5 626.0 290.0 C624.3 284.5 623.8 284.6 622.3 278.0 C620.8 271.4 619.6 270.1 620.1 263.7Z" fill="url(#mgh)" stroke="#808080" stroke-width=".6" stroke-opacity=".75"/>
<path d="M624.5 268 Q626 288 634 306" fill="none" stroke="#a8a8a8" stroke-width=".9"/>
<path d="M648.1 271.5 C652.3 268.6 652.1 267.4 658.8 267.2 C665.5 267.0 668.2 266.4 673.2 270.8 C678.2 275.2 676.8 276.4 677.5 283.7 C678.2 291.0 677.9 289.6 676.0 298.0 C674.1 306.4 674.1 308.1 670.3 315.2 C666.5 322.3 665.9 322.6 661.7 324.5 C657.5 326.4 659.1 327.9 654.5 322.4 C649.9 316.9 648.0 313.0 644.5 303.8 C641.0 294.6 641.6 294.9 641.2 288.0 C640.8 281.1 641.3 282.4 643.1 278.0 C644.9 273.6 643.9 274.4 648.1 271.5Z" fill="#2f4e73"/>
<path d="M648.1 271.5 C652.3 268.6 652.1 267.4 658.8 267.2 C665.5 267.0 668.2 266.4 673.2 270.8 C678.2 275.2 676.8 276.4 677.5 283.7 C678.2 291.0 677.9 289.6 676.0 298.0 C674.1 306.4 674.1 308.1 670.3 315.2 C666.5 322.3 665.9 322.6 661.7 324.5 C657.5 326.4 659.1 327.9 654.5 322.4 C649.9 316.9 648.0 313.0 644.5 303.8 C641.0 294.6 641.6 294.9 641.2 288.0 C640.8 281.1 641.3 282.4 643.1 278.0 C644.9 273.6 643.9 274.4 648.1 271.5Z" fill="none" stroke="#cfcfcf" stroke-width="1.8"/>
<path d="M648.1 271.5 C652.3 268.6 652.1 267.4 658.8 267.2 C665.5 267.0 668.2 266.4 673.2 270.8 C678.2 275.2 676.8 276.4 677.5 283.7 C678.2 291.0 677.9 289.6 676.0 298.0 C674.1 306.4 674.1 308.1 670.3 315.2 C666.5 322.3 665.9 322.6 661.7 324.5 C657.5 326.4 659.1 327.9 654.5 322.4 C649.9 316.9 648.0 313.0 644.5 303.8 C641.0 294.6 641.6 294.9 641.2 288.0 C640.8 281.1 641.3 282.4 643.1 278.0 C644.9 273.6 643.9 274.4 648.1 271.5Z" fill="none" stroke="#8a8a8a" stroke-width=".5" stroke-opacity=".6"/>
<path d="M648 270.5 H673 V276 H648Z" fill="#dedede" stroke="#999" stroke-width=".4"/><path d="M657.6 276 H665.2 L664 321 H659 Z" fill="#d9d9d9"/><ellipse cx="651" cy="281" rx="4.8" ry="3.8" fill="#d2d2d2"/>
<path d="M644 305.5 Q652 301.5 662 303.5 L670 309.5 Q668.5 321.5 661 322.5 L651 320.5 Q645.5 314 644 305.5Z" fill="#e2e2e2" stroke="#a4a4a4" stroke-width=".5"/>
<path d="M569 373 H590 V385 H569Z" fill="#efefef" stroke="#808080" stroke-width=".6" stroke-opacity=".75"/>
<path d="M531.8 377.8 L535.0 365.2 L546.5 358.9 L563.3 363.1 L570.0 369.4 L571.7 382.0 L567.5 401.0 L564.4 404.0 L563.3 424.0 L562.3 445.0 L567.5 457.7 L566.5 474.5 L562.3 483.0 L565.4 487.0 L564.4 508.0 L565.4 529.0 L565.9 545.0 L565.6 570.3 L546.8 570.3 L538.3 560.0 L540.2 533.4 L538.0 508.0 L537.0 487.0 L538.1 483.0 L529.7 474.5 L528.0 457.7 L531.8 445.0 L533.9 424.0 L532.9 403.0Z" fill="url(#mg)" stroke="#808080" stroke-width=".6" stroke-opacity=".75" stroke-linejoin="round"/>
<ellipse cx="554.9" cy="385.2" rx="13.2" ry="10.2" transform="rotate(-15 554.9 385.2)" fill="url(#mgc)" stroke="#a2a2a2" stroke-width=".6"/>
<path d="M566 366 l6 3 l-1 14 l-5 2z" fill="#d8d8d8" stroke="#8c8c8c" stroke-width=".6"/>
<ellipse cx="533.9" cy="466" rx="5.6" ry="13.6" fill="#e6e6e6" stroke="#9a9a9a" stroke-width=".6"/>
<path d="M533.5 421 Q548 427 563.4 421 M531.8 447 Q548 441 562.6 447 M537 486 Q550 492 565 486 M539.5 531 Q552 537 565.4 531" fill="none" stroke="#8e8e8e" stroke-width=".8"/>
<circle cx="550.7" cy="543" r="7.6" fill="url(#mgc)" stroke="#a0a0a0" stroke-width=".5"/>
<path d="M540 552 H566 V566 H540Z" fill="#c9c9c9" stroke="#8a8a8a" stroke-width=".6"/>
<path d="M546.8 570.3 C550.5 568.1 561.2 568.7 565.9 569.0 C570.6 569.3 567.9 569.2 570.5 571.9 C573.1 574.6 576.5 578.0 578.9 582.6 C581.3 587.2 582.4 591.1 582.7 594.8 C583.0 598.5 581.6 600.3 580.4 600.9 C579.2 601.5 578.0 601.0 576.6 597.9 C575.2 594.8 575.6 589.3 573.5 585.6 C571.4 581.9 567.7 580.4 565.9 579.5 C564.1 578.6 565.4 579.8 564.3 581.0 C563.2 582.2 561.1 581.0 560.5 585.6 C559.9 590.2 560.7 596.7 561.3 604.0 C561.9 611.3 564.2 618.5 563.6 622.3 C563.0 626.1 560.5 626.1 558.2 623.0 C555.9 619.9 554.2 615.6 552.1 607.0 C550.0 598.4 548.6 587.3 547.5 580.0 C546.4 572.7 543.1 572.5 546.8 570.3Z" fill="url(#mg2)" stroke="#808080" stroke-width=".6" stroke-opacity=".75"/>
<path d="M553 590 l4 28 M556 588 l3 30" fill="none" stroke="#999" stroke-width=".6"/>
<path d="M711 364 H723 V374 H711Z" fill="#efefef" stroke="#808080" stroke-width=".6" stroke-opacity=".75"/>
<path d="M716.8 358.9 L722.0 350.5 L733.6 346.3 L748.3 349.5 L756.7 361.0 L758.8 375.7 L750.4 388.3 L744.0 390.4 L743.0 413.6 L742.0 432.5 L744.0 440.9 L743.7 457.7 L739.9 466.0 L738.8 470.3 L737.8 491.3 L737.8 512.3 L740.2 520.0 L740.0 545.9 L716.5 545.9 L711.9 530.0 L713.6 512.3 L711.5 491.3 L709.4 470.3 L711.5 466.0 L706.3 457.7 L705.2 440.9 L710.5 432.5 L711.5 413.6 L716.8 390.4 L717.8 377.8Z" fill="url(#mg)" stroke="#808080" stroke-width=".6" stroke-opacity=".75" stroke-linejoin="round"/>
<ellipse cx="746.2" cy="376.8" rx="11.8" ry="10.6" transform="rotate(-15 746.2 376.8)" fill="url(#mgc)" stroke="#a2a2a2" stroke-width=".6"/>
<path d="M718 356 l8 -3 l3 14 l-8 6z" fill="#dadada" stroke="#8c8c8c" stroke-width=".6"/>
<ellipse cx="709.6" cy="447.2" rx="5.4" ry="13" fill="#f0f0f0" stroke="#9a9a9a" stroke-width=".6"/>
<path d="M713 408 Q728 414 743.4 407 M710.5 434 Q726 428 742 434 M709.6 469 Q724 475 739 469 M712.6 510 Q724 516 737.8 511" fill="none" stroke="#8e8e8e" stroke-width=".8"/>
<circle cx="729.4" cy="519.5" r="8" fill="url(#mgc)" stroke="#a0a0a0" stroke-width=".5"/>
<path d="M714 528 H739.6 V543 H714Z" fill="#c6c6c6" stroke="#8a8a8a" stroke-width=".6"/>
<path d="M716.5 545.9 C720.6 542.2 732.3 542.2 736.4 545.9 C740.5 549.6 737.3 556.3 737.1 564.2 C736.9 572.1 736.7 579.2 735.6 585.6 C734.5 592.0 733.0 595.1 731.8 596.3 C730.6 597.5 731.2 594.4 729.5 591.7 C727.8 589.0 724.3 586.9 723.4 582.6 C722.5 578.3 725.2 573.4 724.9 570.3 C724.6 567.2 722.7 565.5 721.8 567.3 C720.9 569.1 721.2 577.1 720.3 579.5 C719.4 581.9 718.1 582.6 717.2 579.5 C716.3 576.4 715.8 570.9 715.7 564.2 C715.6 557.5 712.4 549.6 716.5 545.9Z" fill="url(#mg2)" stroke="#808080" stroke-width=".6" stroke-opacity=".75"/>
<path d="M727 572 l3 18 M730 570 l3 20" fill="none" stroke="#999" stroke-width=".6"/>
</svg>
</div>
<div class="a" style="left:0;top:37px;width:956px;height:722px;border:1px solid #292929;border-top:1px solid #262626;pointer-events:none"></div>
</div>
</div>
</body></html>
